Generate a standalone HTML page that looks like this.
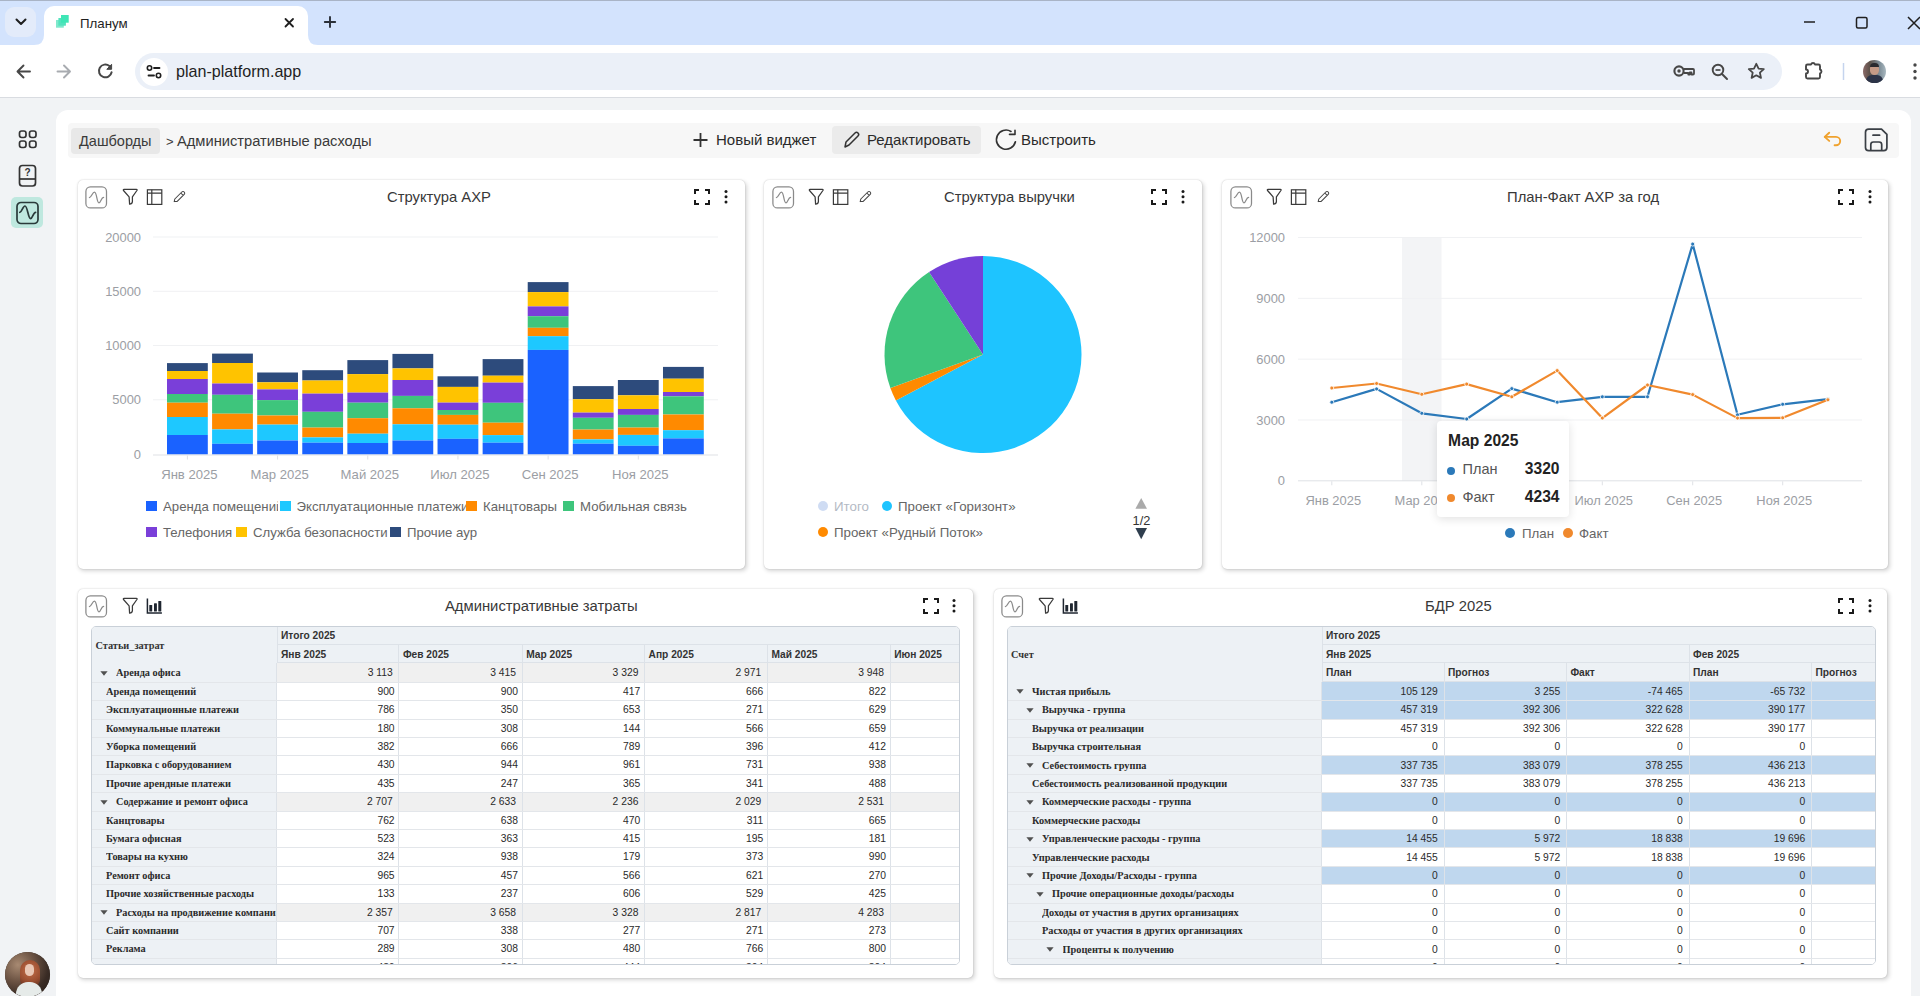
<!DOCTYPE html><html><head><meta charset="utf-8"><style>
*{margin:0;padding:0;box-sizing:border-box}
html,body{width:1920px;height:996px;overflow:hidden;background:#f1f3f5;font-family:"Liberation Sans", sans-serif;color:#333}
.a{position:absolute}
.t{position:absolute;white-space:nowrap;line-height:1}
.card{position:absolute;background:#fff;border-radius:5px;box-shadow:0 0 1.5px rgba(0,0,0,.22),1.5px 2px 4px rgba(0,0,0,.17)}
svg{position:absolute;overflow:visible}
</style></head><body>
<div class="a" style="left:0;top:0;width:1920px;height:45px;background:#d3e3fd"></div>
<div class="a" style="left:0;top:0;width:1920px;height:1px;background:#a9b4c6"></div>
<div class="a" style="left:5px;top:7px;width:31px;height:30px;border-radius:9px;background:#e3ebfa"></div>
<svg style="left:0;top:0" width="60" height="44"><path d="M16.5 19.5 L21 24 L25.5 19.5" fill="none" stroke="#1f1f1f" stroke-width="2" stroke-linecap="round" stroke-linejoin="round"/></svg>
<div class="a" style="left:44px;top:6px;width:264px;height:40px;background:#fff;border-radius:10px 10px 0 0"></div>
<svg style="left:0;top:0" width="330" height="50"><path d="M34 45 Q44 45 44 35 L44 45 Z" fill="#fff"/><path d="M318 45 Q308 45 308 35 L308 45 Z" fill="#fff"/></svg>
<svg style="left:50px;top:10px" width="24" height="24"><rect x="6" y="10" width="7.8" height="7.7" fill="#7fe9cc"/><rect x="8.4" y="8" width="7.5" height="7.7" fill="#52e3bd"/><rect x="11" y="5" width="7.7" height="7.7" fill="#3ee6b6"/></svg>
<div class="t" style="left:80px;top:17px;font-size:13.3px;color:#1f1f1f">Планум</div>
<svg style="left:280px;top:14px" width="20" height="18"><path d="M5.5 5 L13 12.5 M13 5 L5.5 12.5" stroke="#1f1f1f" stroke-width="1.8" stroke-linecap="round"/></svg>
<svg style="left:320px;top:12px" width="20" height="20"><path d="M10 5 V15 M4.8 10 H15.2" stroke="#2a3038" stroke-width="1.9" stroke-linecap="round"/></svg>
<svg style="left:1790px;top:0" width="130" height="44"><path d="M14 22 H25" stroke="#1f1f1f" stroke-width="1.5"/><rect x="66.5" y="17.5" width="10.5" height="10.5" rx="1.5" fill="none" stroke="#1f1f1f" stroke-width="1.5"/><path d="M118 17 L130 29 M130 17 L118 29" stroke="#1f1f1f" stroke-width="1.5"/></svg>
<div class="a" style="left:0;top:45px;width:1920px;height:52px;background:#fff"></div>
<div class="a" style="left:0;top:97px;width:1920px;height:1px;background:#d9dce1"></div>
<svg style="left:0;top:44px" width="130" height="53"><path d="M30 27.5 H18 M23.5 21.5 L17.5 27.5 L23.5 33.5" fill="none" stroke="#474747" stroke-width="1.9" stroke-linecap="round" stroke-linejoin="round"/><path d="M57.5 27.5 H69.5 M64 21.5 L70 27.5 L64 33.5" fill="none" stroke="#a8abb0" stroke-width="1.9" stroke-linecap="round" stroke-linejoin="round"/><path d="M109.4 22 A6.4 6.4 0 1 0 111.6 28.2" fill="none" stroke="#474747" stroke-width="2" stroke-linecap="round"/><path d="M111.6 20.3 V25.3 H106.8 Z" fill="#474747" stroke="#474747" stroke-width="1" stroke-linejoin="round"/></svg>
<div class="a" style="left:135px;top:53px;width:1647px;height:37px;border-radius:19px;background:#ebf0f8"></div>
<div class="a" style="left:140px;top:58px;width:28px;height:28px;border-radius:14px;background:#fff"></div>
<svg style="left:140px;top:58px" width="28" height="28"><circle cx="9.5" cy="10" r="2.2" fill="none" stroke="#1f1f1f" stroke-width="1.6"/><path d="M14 10 H19.5" stroke="#1f1f1f" stroke-width="1.8" stroke-linecap="round"/><circle cx="18.5" cy="17.5" r="2.2" fill="none" stroke="#1f1f1f" stroke-width="1.6"/><path d="M8.5 17.5 H14" stroke="#1f1f1f" stroke-width="1.8" stroke-linecap="round"/></svg>
<div class="t" style="left:176px;top:62.5px;font-size:16.1px;color:#1f1f1f">plan-platform.app</div>
<svg style="left:1660px;top:44px" width="260" height="53"><circle cx="19" cy="27" r="4.6" fill="none" stroke="#474747" stroke-width="2.1"/><circle cx="19" cy="27" r="1.7" fill="#474747"/><path d="M23.8 25 H33 Q34 25 34 26 V29.5 Q34 30.5 33 30.5 H31.5 V28.5 H29.8 V30.5 H28.3 V29 H24" fill="none" stroke="#474747" stroke-width="1.8" stroke-linejoin="round"/><circle cx="58" cy="26" r="5.3" fill="none" stroke="#474747" stroke-width="1.9"/><path d="M55.5 26 H60.5" stroke="#474747" stroke-width="1.7"/><path d="M62 30 L67 35" stroke="#474747" stroke-width="2" stroke-linecap="round"/><path d="M96.3 19.8 L98.6 24.6 L103.8 25.2 L99.9 28.7 L101 33.9 L96.3 31.3 L91.6 33.9 L92.7 28.7 L88.8 25.2 L94 24.6 Z" fill="none" stroke="#474747" stroke-width="1.8" stroke-linejoin="round"/><path d="M146 22 Q146 20.5 147.5 20.5 H151 A2.1 2.1 0 0 1 155 20.5 H158.5 Q160 20.5 160 22 V25.5 A2.1 2.1 0 0 1 160 29.5 V33 Q160 34.5 158.5 34.5 H147.5 Q146 34.5 146 33 V29.5 A2 2 0 0 0 146 25.5 Z" fill="none" stroke="#474747" stroke-width="1.9" stroke-linejoin="round"/><path d="M183.5 19 V36" stroke="#c5d4ee" stroke-width="1.5"/><circle cx="255" cy="21" r="1.7" fill="#474747"/><circle cx="255" cy="27.5" r="1.7" fill="#474747"/><circle cx="255" cy="34" r="1.7" fill="#474747"/></svg>
<div class="a" style="left:1863px;top:60px;width:23px;height:23px;border-radius:12px;overflow:hidden;background:linear-gradient(90deg,#8a6a68 0,#5b5048 30%,#7c8c96 70%,#a9b8c0 100%)"><div class="a" style="left:7px;top:4px;width:9px;height:11px;border-radius:5px;background:#c49a86"></div><div class="a" style="left:7px;top:3px;width:9px;height:4px;border-radius:4px 4px 0 0;background:#2a2a2e"></div><div class="a" style="left:3px;top:15px;width:17px;height:10px;border-radius:6px 6px 0 0;background:#2c3448"></div></div>
<svg style="left:0;top:98px" width="56" height="140"><rect x="19.5" y="33" width="6.5" height="6.5" rx="2.2" fill="none" stroke="#333" stroke-width="1.7"/><rect x="29.5" y="33" width="6.5" height="6.5" rx="2.2" fill="none" stroke="#333" stroke-width="1.7"/><rect x="19.5" y="43" width="6.5" height="6.5" rx="2.2" fill="none" stroke="#333" stroke-width="1.7"/><rect x="29.5" y="43" width="6.5" height="6.5" rx="2.2" fill="none" stroke="#333" stroke-width="1.7"/><rect x="19.5" y="67.5" width="16" height="20.5" rx="3" fill="none" stroke="#333" stroke-width="1.7"/><path d="M19.5 81 H35.5" stroke="#333" stroke-width="1.7"/><text x="27.5" y="78" font-size="10" font-weight="bold" text-anchor="middle" fill="#333" font-family="Liberation Sans">?</text></svg>
<div class="a" style="left:11px;top:197px;width:32px;height:31px;border-radius:5px;background:#bfe8df"></div>
<svg style="left:11px;top:197px" width="32" height="31"><rect x="6" y="5.5" width="21" height="21" rx="4" fill="none" stroke="#2a3a3a" stroke-width="1.7"/><path d="M8.8 15.3 C10.9 15.3 11.8 9 14 9 C16.6 9 17 21.6 19.6 21.6 C21.6 21.6 22.2 15.3 24.6 15.3" fill="none" stroke="#2a3a3a" stroke-width="1.7" stroke-linecap="round"/></svg>
<div class="a" style="left:4.5px;top:951.5px;width:45.5px;height:45.5px;border-radius:23px;overflow:hidden;background:#3a2d27"><div class="a" style="left:0;top:0;width:46px;height:46px;background:radial-gradient(circle at 28% 28%,#a88a72 0,#6d5444 35%,#3a2c25 65%,#221a17 100%)"></div><div class="a" style="left:15px;top:8px;width:20px;height:26px;border-radius:10px 10px 6px 6px;background:radial-gradient(circle at 50% 40%,#c4704a 0,#9a4e30 60%,#5a3020 100%)"></div><div class="a" style="left:20px;top:12px;width:9px;height:12px;border-radius:5px;background:#e9c7b4"></div><div class="a" style="left:11px;top:30px;width:26px;height:20px;border-radius:12px 12px 0 0;background:#e6ebe9"></div></div>
<div class="a" style="left:56px;top:110px;width:1855px;height:900px;border-radius:12px;background:#fff"></div>
<div class="a" style="left:68px;top:123px;width:1831px;height:35px;border-radius:4px;background:#f7f7f7"></div>
<div class="a" style="left:71px;top:128px;width:89px;height:26px;border-radius:4px;background:#e8e8e8"></div>
<div class="t" style="left:79px;top:133.5px;font-size:14.5px;color:#3a3a3a">Дашборды</div>
<div class="t" style="left:166px;top:135px;font-size:13px;color:#3a3a3a">&gt;</div><div class="t" style="left:177px;top:133.5px;font-size:14.7px;color:#3a3a3a">Административные расходы</div>
<div class="a" style="left:832px;top:126px;width:149px;height:28px;border-radius:4px;background:#ebebeb"></div>
<svg style="left:680px;top:120px" width="440" height="40"><path d="M20.5 13 V27 M13.5 20 H27.5" stroke="#333" stroke-width="1.8"/><path d="M165 27 L166 22 L175 13 A1.8 1.8 0 0 1 178 16 L169 25 Z" fill="none" stroke="#333" stroke-width="1.5" stroke-linejoin="round"/><path d="M331 11.4 A9.6 9.6 0 1 0 335.4 21.8" fill="none" stroke="#333" stroke-width="1.7" stroke-linecap="round"/><path d="M335 10.2 L335 14.4 L329.5 14.4" fill="none" stroke="#333" stroke-width="1.6" stroke-linecap="round" stroke-linejoin="round"/></svg>
<div class="t" style="left:716px;top:132px;font-size:15px;color:#2a2a2a">Новый виджет</div>
<div class="t" style="left:867px;top:132px;font-size:15px;color:#2a2a2a">Редактировать</div>
<div class="t" style="left:1021px;top:132px;font-size:15px;color:#2a2a2a">Выстроить</div>
<svg style="left:1815px;top:122px" width="90" height="37"><path d="M14.2 10.7 L9.7 14.9 L14.2 18.9" fill="none" stroke="#f0a22e" stroke-width="1.9" stroke-linecap="round" stroke-linejoin="round"/><path d="M10 14.9 H21 A4.2 4.2 0 0 1 21 23.3 H19.6" fill="none" stroke="#f0a22e" stroke-width="1.9" stroke-linecap="round"/><path d="M53.7 7.1 H66.5 L71.9 12.4 V25.5 A3.2 3.2 0 0 1 68.7 28.7 H53.7 A3.2 3.2 0 0 1 50.5 25.5 V10.3 A3.2 3.2 0 0 1 53.7 7.1 Z" fill="none" stroke="#3a3f45" stroke-width="1.7" stroke-linejoin="round"/><path d="M58 13.2 H64.6" stroke="#3a3f45" stroke-width="1.7" stroke-linecap="round"/><path d="M55.8 28.7 V22.6 A2.6 2.6 0 0 1 58.4 20 H64.1 A2.6 2.6 0 0 1 66.7 22.6 V28.7" fill="none" stroke="#3a3f45" stroke-width="1.7"/></svg>
<div class="card" style="left:78px;top:180px;width:667px;height:389px"></div>
<div class="card" style="left:764px;top:180px;width:438px;height:389px"></div>
<div class="card" style="left:1222px;top:180px;width:666px;height:389px"></div>
<div class="card" style="left:78px;top:589px;width:895px;height:389px"></div>
<div class="card" style="left:994px;top:589px;width:893px;height:389px"></div>
<svg style="left:85px;top:186px" width="23" height="23"><rect x="0.9" y="0.9" width="20.6" height="21" rx="4.5" fill="none" stroke="#8a8a8a" stroke-width="1.25"/><path d="M4.4 11.5 C6.6 11.5 7.3 6.1 9.5 6.1 C11.9 6.1 11.7 16.9 13.9 16.9 C16 16.9 16.1 11.4 18.6 11.4" fill="none" stroke="#8a8a8a" stroke-width="1.25" stroke-linecap="round" stroke-linejoin="round"/></svg>
<svg style="left:122px;top:188px" width="18" height="18"><path d="M2 1.4 H14.4 Q15.6 1.4 14.9 2.5 L10.4 8.8 V13.6 Q10.2 16 7.6 16.1 L7.1 8.8 L1.5 2.5 Q0.9 1.4 2 1.4 Z" fill="none" stroke="#3a3a3a" stroke-width="1.25" stroke-linejoin="round"/></svg>
<svg style="left:146px;top:188px" width="18" height="18"><rect x="1.4" y="1.8" width="14.4" height="14.6" fill="none" stroke="#3a3a3a" stroke-width="1.2"/><path d="M1.4 5.1 H15.8 M5.8 1.8 V16.4" stroke="#3a3a3a" stroke-width="1.2"/></svg>
<svg style="left:173px;top:190px" width="14" height="14"><path d="M1.2 11.6 L1.8 9 L8.8 2 A1.6 1.6 0 0 1 11.2 4.4 L4.2 11.4 Z M7.8 3 L10.2 5.4" fill="none" stroke="#444" stroke-width="1.05" stroke-linejoin="round"/></svg>
<div class="t" style="left:387px;top:189.5px;font-size:14.8px;color:#383838">Структура АХР</div>
<svg style="left:694px;top:189px" width="16" height="16"><path d="M1 5 V1 H5 M11 1 H15 V5 M15 11 V15 H11 M5 15 H1 V11" fill="none" stroke="#1a1a1a" stroke-width="2"/></svg>
<svg style="left:723px;top:189px" width="6" height="16"><circle cx="3" cy="2.5" r="1.5" fill="#1a1a1a"/><circle cx="3" cy="7.7" r="1.5" fill="#1a1a1a"/><circle cx="3" cy="12.9" r="1.5" fill="#1a1a1a"/></svg>
<svg style="left:772px;top:186px" width="23" height="23"><rect x="0.9" y="0.9" width="20.6" height="21" rx="4.5" fill="none" stroke="#8a8a8a" stroke-width="1.25"/><path d="M4.4 11.5 C6.6 11.5 7.3 6.1 9.5 6.1 C11.9 6.1 11.7 16.9 13.9 16.9 C16 16.9 16.1 11.4 18.6 11.4" fill="none" stroke="#8a8a8a" stroke-width="1.25" stroke-linecap="round" stroke-linejoin="round"/></svg>
<svg style="left:808px;top:188px" width="18" height="18"><path d="M2 1.4 H14.4 Q15.6 1.4 14.9 2.5 L10.4 8.8 V13.6 Q10.2 16 7.6 16.1 L7.1 8.8 L1.5 2.5 Q0.9 1.4 2 1.4 Z" fill="none" stroke="#3a3a3a" stroke-width="1.25" stroke-linejoin="round"/></svg>
<svg style="left:832px;top:188px" width="18" height="18"><rect x="1.4" y="1.8" width="14.4" height="14.6" fill="none" stroke="#3a3a3a" stroke-width="1.2"/><path d="M1.4 5.1 H15.8 M5.8 1.8 V16.4" stroke="#3a3a3a" stroke-width="1.2"/></svg>
<svg style="left:859px;top:190px" width="14" height="14"><path d="M1.2 11.6 L1.8 9 L8.8 2 A1.6 1.6 0 0 1 11.2 4.4 L4.2 11.4 Z M7.8 3 L10.2 5.4" fill="none" stroke="#444" stroke-width="1.05" stroke-linejoin="round"/></svg>
<div class="t" style="left:944px;top:189.5px;font-size:14.8px;color:#383838">Структура выручки</div>
<svg style="left:1151px;top:189px" width="16" height="16"><path d="M1 5 V1 H5 M11 1 H15 V5 M15 11 V15 H11 M5 15 H1 V11" fill="none" stroke="#1a1a1a" stroke-width="2"/></svg>
<svg style="left:1180px;top:189px" width="6" height="16"><circle cx="3" cy="2.5" r="1.5" fill="#1a1a1a"/><circle cx="3" cy="7.7" r="1.5" fill="#1a1a1a"/><circle cx="3" cy="12.9" r="1.5" fill="#1a1a1a"/></svg>
<svg style="left:1229.5px;top:186px" width="23" height="23"><rect x="0.9" y="0.9" width="20.6" height="21" rx="4.5" fill="none" stroke="#8a8a8a" stroke-width="1.25"/><path d="M4.4 11.5 C6.6 11.5 7.3 6.1 9.5 6.1 C11.9 6.1 11.7 16.9 13.9 16.9 C16 16.9 16.1 11.4 18.6 11.4" fill="none" stroke="#8a8a8a" stroke-width="1.25" stroke-linecap="round" stroke-linejoin="round"/></svg>
<svg style="left:1266px;top:188px" width="18" height="18"><path d="M2 1.4 H14.4 Q15.6 1.4 14.9 2.5 L10.4 8.8 V13.6 Q10.2 16 7.6 16.1 L7.1 8.8 L1.5 2.5 Q0.9 1.4 2 1.4 Z" fill="none" stroke="#3a3a3a" stroke-width="1.25" stroke-linejoin="round"/></svg>
<svg style="left:1290px;top:188px" width="18" height="18"><rect x="1.4" y="1.8" width="14.4" height="14.6" fill="none" stroke="#3a3a3a" stroke-width="1.2"/><path d="M1.4 5.1 H15.8 M5.8 1.8 V16.4" stroke="#3a3a3a" stroke-width="1.2"/></svg>
<svg style="left:1317px;top:190px" width="14" height="14"><path d="M1.2 11.6 L1.8 9 L8.8 2 A1.6 1.6 0 0 1 11.2 4.4 L4.2 11.4 Z M7.8 3 L10.2 5.4" fill="none" stroke="#444" stroke-width="1.05" stroke-linejoin="round"/></svg>
<div class="t" style="left:1507px;top:189.5px;font-size:14.8px;color:#383838">План-Факт АХР за год</div>
<svg style="left:1838px;top:189px" width="16" height="16"><path d="M1 5 V1 H5 M11 1 H15 V5 M15 11 V15 H11 M5 15 H1 V11" fill="none" stroke="#1a1a1a" stroke-width="2"/></svg>
<svg style="left:1867px;top:189px" width="6" height="16"><circle cx="3" cy="2.5" r="1.5" fill="#1a1a1a"/><circle cx="3" cy="7.7" r="1.5" fill="#1a1a1a"/><circle cx="3" cy="12.9" r="1.5" fill="#1a1a1a"/></svg>
<svg style="left:85px;top:595px" width="23" height="23"><rect x="0.9" y="0.9" width="20.6" height="21" rx="4.5" fill="none" stroke="#8a8a8a" stroke-width="1.25"/><path d="M4.4 11.5 C6.6 11.5 7.3 6.1 9.5 6.1 C11.9 6.1 11.7 16.9 13.9 16.9 C16 16.9 16.1 11.4 18.6 11.4" fill="none" stroke="#8a8a8a" stroke-width="1.25" stroke-linecap="round" stroke-linejoin="round"/></svg>
<svg style="left:122px;top:597px" width="18" height="18"><path d="M2 1.4 H14.4 Q15.6 1.4 14.9 2.5 L10.4 8.8 V13.6 Q10.2 16 7.6 16.1 L7.1 8.8 L1.5 2.5 Q0.9 1.4 2 1.4 Z" fill="none" stroke="#3a3a3a" stroke-width="1.25" stroke-linejoin="round"/></svg>
<svg style="left:145px;top:598px" width="18" height="18"><path d="M2.4 0.6 V14.9 H16.9" fill="none" stroke="#1f2630" stroke-width="1.5"/><rect x="4.3" y="7" width="2.9" height="6.6" rx="0.6" fill="#1f2630"/><rect x="9" y="5.2" width="2.9" height="8.4" rx="0.6" fill="#1f2630"/><rect x="13.3" y="3" width="3" height="10.6" rx="0.6" fill="#1f2630"/></svg>
<div class="t" style="left:445px;top:598.5px;font-size:14.8px;color:#383838">Административные затраты</div>
<svg style="left:923px;top:598px" width="16" height="16"><path d="M1 5 V1 H5 M11 1 H15 V5 M15 11 V15 H11 M5 15 H1 V11" fill="none" stroke="#1a1a1a" stroke-width="2"/></svg>
<svg style="left:951px;top:598px" width="6" height="16"><circle cx="3" cy="2.5" r="1.5" fill="#1a1a1a"/><circle cx="3" cy="7.7" r="1.5" fill="#1a1a1a"/><circle cx="3" cy="12.9" r="1.5" fill="#1a1a1a"/></svg>
<svg style="left:1001px;top:595px" width="23" height="23"><rect x="0.9" y="0.9" width="20.6" height="21" rx="4.5" fill="none" stroke="#8a8a8a" stroke-width="1.25"/><path d="M4.4 11.5 C6.6 11.5 7.3 6.1 9.5 6.1 C11.9 6.1 11.7 16.9 13.9 16.9 C16 16.9 16.1 11.4 18.6 11.4" fill="none" stroke="#8a8a8a" stroke-width="1.25" stroke-linecap="round" stroke-linejoin="round"/></svg>
<svg style="left:1038px;top:597px" width="18" height="18"><path d="M2 1.4 H14.4 Q15.6 1.4 14.9 2.5 L10.4 8.8 V13.6 Q10.2 16 7.6 16.1 L7.1 8.8 L1.5 2.5 Q0.9 1.4 2 1.4 Z" fill="none" stroke="#3a3a3a" stroke-width="1.25" stroke-linejoin="round"/></svg>
<svg style="left:1061px;top:598px" width="18" height="18"><path d="M2.4 0.6 V14.9 H16.9" fill="none" stroke="#1f2630" stroke-width="1.5"/><rect x="4.3" y="7" width="2.9" height="6.6" rx="0.6" fill="#1f2630"/><rect x="9" y="5.2" width="2.9" height="8.4" rx="0.6" fill="#1f2630"/><rect x="13.3" y="3" width="3" height="10.6" rx="0.6" fill="#1f2630"/></svg>
<div class="t" style="left:1425px;top:598.5px;font-size:14.8px;color:#383838">БДР 2025</div>
<svg style="left:1838px;top:598px" width="16" height="16"><path d="M1 5 V1 H5 M11 1 H15 V5 M15 11 V15 H11 M5 15 H1 V11" fill="none" stroke="#1a1a1a" stroke-width="2"/></svg>
<svg style="left:1867px;top:598px" width="6" height="16"><circle cx="3" cy="2.5" r="1.5" fill="#1a1a1a"/><circle cx="3" cy="7.7" r="1.5" fill="#1a1a1a"/><circle cx="3" cy="12.9" r="1.5" fill="#1a1a1a"/></svg>
<svg style="left:0;top:0" width="1920" height="996"><rect x="153" y="236.5" width="565" height="1" fill="#f0f1f3"/><text x="141" y="241.6" font-size="12.9" text-anchor="end" fill="#9b9ea4" font-family="Liberation Sans">20000</text><rect x="153" y="290.8" width="565" height="1" fill="#f0f1f3"/><text x="141" y="295.90000000000003" font-size="12.9" text-anchor="end" fill="#9b9ea4" font-family="Liberation Sans">15000</text><rect x="153" y="345.0" width="565" height="1" fill="#f0f1f3"/><text x="141" y="350.1" font-size="12.9" text-anchor="end" fill="#9b9ea4" font-family="Liberation Sans">10000</text><rect x="153" y="399.3" width="565" height="1" fill="#f0f1f3"/><text x="141" y="404.40000000000003" font-size="12.9" text-anchor="end" fill="#9b9ea4" font-family="Liberation Sans">5000</text><text x="141" y="459.1" font-size="12.9" text-anchor="end" fill="#9b9ea4" font-family="Liberation Sans">0</text><rect x="167.00" y="363.10" width="40.8" height="7.90" fill="#2d4b7c"/><rect x="167.00" y="371.00" width="40.8" height="8.00" fill="#ffc300"/><rect x="167.00" y="379.00" width="40.8" height="15.00" fill="#7a3fd9"/><rect x="167.00" y="394.00" width="40.8" height="8.70" fill="#3ec57c"/><rect x="167.00" y="402.70" width="40.8" height="14.30" fill="#ff8a00"/><rect x="167.00" y="417.00" width="40.8" height="18.00" fill="#1ec8ff"/><rect x="167.00" y="435.00" width="40.8" height="19.50" fill="#1a62ff"/><rect x="212.09" y="353.60" width="40.8" height="9.40" fill="#2d4b7c"/><rect x="212.09" y="363.00" width="40.8" height="20.50" fill="#ffc300"/><rect x="212.09" y="383.50" width="40.8" height="11.30" fill="#7a3fd9"/><rect x="212.09" y="394.80" width="40.8" height="18.90" fill="#3ec57c"/><rect x="212.09" y="413.70" width="40.8" height="15.70" fill="#ff8a00"/><rect x="212.09" y="429.40" width="40.8" height="14.40" fill="#1ec8ff"/><rect x="212.09" y="443.80" width="40.8" height="10.70" fill="#1a62ff"/><rect x="257.18" y="372.50" width="40.8" height="9.80" fill="#2d4b7c"/><rect x="257.18" y="382.30" width="40.8" height="7.10" fill="#ffc300"/><rect x="257.18" y="389.40" width="40.8" height="10.70" fill="#7a3fd9"/><rect x="257.18" y="400.10" width="40.8" height="15.40" fill="#3ec57c"/><rect x="257.18" y="415.50" width="40.8" height="9.10" fill="#ff8a00"/><rect x="257.18" y="424.60" width="40.8" height="15.90" fill="#1ec8ff"/><rect x="257.18" y="440.50" width="40.8" height="14.00" fill="#1a62ff"/><rect x="302.27" y="370.20" width="40.8" height="10.30" fill="#2d4b7c"/><rect x="302.27" y="380.50" width="40.8" height="13.10" fill="#ffc300"/><rect x="302.27" y="393.60" width="40.8" height="18.20" fill="#7a3fd9"/><rect x="302.27" y="411.80" width="40.8" height="15.80" fill="#3ec57c"/><rect x="302.27" y="427.60" width="40.8" height="9.80" fill="#ff8a00"/><rect x="302.27" y="437.40" width="40.8" height="5.30" fill="#1ec8ff"/><rect x="302.27" y="442.70" width="40.8" height="11.80" fill="#1a62ff"/><rect x="347.36" y="360.10" width="40.8" height="14.00" fill="#2d4b7c"/><rect x="347.36" y="374.10" width="40.8" height="18.50" fill="#ffc300"/><rect x="347.36" y="392.60" width="40.8" height="10.10" fill="#7a3fd9"/><rect x="347.36" y="402.70" width="40.8" height="15.50" fill="#3ec57c"/><rect x="347.36" y="418.20" width="40.8" height="15.50" fill="#ff8a00"/><rect x="347.36" y="433.70" width="40.8" height="9.30" fill="#1ec8ff"/><rect x="347.36" y="443.00" width="40.8" height="11.50" fill="#1a62ff"/><rect x="392.45" y="353.90" width="40.8" height="14.50" fill="#2d4b7c"/><rect x="392.45" y="368.40" width="40.8" height="11.60" fill="#ffc300"/><rect x="392.45" y="380.00" width="40.8" height="15.90" fill="#7a3fd9"/><rect x="392.45" y="395.90" width="40.8" height="12.40" fill="#3ec57c"/><rect x="392.45" y="408.30" width="40.8" height="16.00" fill="#ff8a00"/><rect x="392.45" y="424.30" width="40.8" height="16.20" fill="#1ec8ff"/><rect x="392.45" y="440.50" width="40.8" height="14.00" fill="#1a62ff"/><rect x="437.54" y="376.30" width="40.8" height="10.60" fill="#2d4b7c"/><rect x="437.54" y="386.90" width="40.8" height="15.70" fill="#ffc300"/><rect x="437.54" y="402.60" width="40.8" height="7.40" fill="#7a3fd9"/><rect x="437.54" y="410.00" width="40.8" height="4.90" fill="#3ec57c"/><rect x="437.54" y="414.90" width="40.8" height="9.80" fill="#ff8a00"/><rect x="437.54" y="424.70" width="40.8" height="14.10" fill="#1ec8ff"/><rect x="437.54" y="438.80" width="40.8" height="15.70" fill="#1a62ff"/><rect x="482.63" y="359.10" width="40.8" height="16.60" fill="#2d4b7c"/><rect x="482.63" y="375.70" width="40.8" height="6.90" fill="#ffc300"/><rect x="482.63" y="382.60" width="40.8" height="20.20" fill="#7a3fd9"/><rect x="482.63" y="402.80" width="40.8" height="19.90" fill="#3ec57c"/><rect x="482.63" y="422.70" width="40.8" height="12.40" fill="#ff8a00"/><rect x="482.63" y="435.10" width="40.8" height="7.60" fill="#1ec8ff"/><rect x="482.63" y="442.70" width="40.8" height="11.80" fill="#1a62ff"/><rect x="527.72" y="282.10" width="40.8" height="10.00" fill="#2d4b7c"/><rect x="527.72" y="292.10" width="40.8" height="14.30" fill="#ffc300"/><rect x="527.72" y="306.40" width="40.8" height="9.80" fill="#7a3fd9"/><rect x="527.72" y="316.20" width="40.8" height="11.60" fill="#3ec57c"/><rect x="527.72" y="327.80" width="40.8" height="8.40" fill="#ff8a00"/><rect x="527.72" y="336.20" width="40.8" height="13.70" fill="#1ec8ff"/><rect x="527.72" y="349.90" width="40.8" height="104.60" fill="#1a62ff"/><rect x="572.81" y="386.10" width="40.8" height="13.10" fill="#2d4b7c"/><rect x="572.81" y="399.20" width="40.8" height="13.40" fill="#ffc300"/><rect x="572.81" y="412.60" width="40.8" height="5.20" fill="#7a3fd9"/><rect x="572.81" y="417.80" width="40.8" height="11.80" fill="#3ec57c"/><rect x="572.81" y="429.60" width="40.8" height="9.80" fill="#ff8a00"/><rect x="572.81" y="439.40" width="40.8" height="4.30" fill="#1ec8ff"/><rect x="572.81" y="443.70" width="40.8" height="10.80" fill="#1a62ff"/><rect x="617.90" y="380.00" width="40.8" height="15.30" fill="#2d4b7c"/><rect x="617.90" y="395.30" width="40.8" height="13.70" fill="#ffc300"/><rect x="617.90" y="409.00" width="40.8" height="5.90" fill="#7a3fd9"/><rect x="617.90" y="414.90" width="40.8" height="12.70" fill="#3ec57c"/><rect x="617.90" y="427.60" width="40.8" height="7.30" fill="#ff8a00"/><rect x="617.90" y="434.90" width="40.8" height="10.90" fill="#1ec8ff"/><rect x="617.90" y="445.80" width="40.8" height="8.70" fill="#1a62ff"/><rect x="662.99" y="366.90" width="40.8" height="11.80" fill="#2d4b7c"/><rect x="662.99" y="378.70" width="40.8" height="13.30" fill="#ffc300"/><rect x="662.99" y="392.00" width="40.8" height="4.30" fill="#7a3fd9"/><rect x="662.99" y="396.30" width="40.8" height="18.20" fill="#3ec57c"/><rect x="662.99" y="414.50" width="40.8" height="15.70" fill="#ff8a00"/><rect x="662.99" y="430.20" width="40.8" height="8.20" fill="#1ec8ff"/><rect x="662.99" y="438.40" width="40.8" height="16.10" fill="#1a62ff"/><rect x="153" y="454.5" width="565" height="1" fill="#dfe1e5"/><rect x="186.90" y="455.5" width="1" height="4" fill="#dfe1e5"/><text x="189.40" y="478.5" font-size="13.1" text-anchor="middle" fill="#9b9ea4" font-family="Liberation Sans">Янв 2025</text><rect x="277.08" y="455.5" width="1" height="4" fill="#dfe1e5"/><text x="279.58" y="478.5" font-size="13.1" text-anchor="middle" fill="#9b9ea4" font-family="Liberation Sans">Мар 2025</text><rect x="367.26" y="455.5" width="1" height="4" fill="#dfe1e5"/><text x="369.76" y="478.5" font-size="13.1" text-anchor="middle" fill="#9b9ea4" font-family="Liberation Sans">Май 2025</text><rect x="457.44" y="455.5" width="1" height="4" fill="#dfe1e5"/><text x="459.94" y="478.5" font-size="13.1" text-anchor="middle" fill="#9b9ea4" font-family="Liberation Sans">Июл 2025</text><rect x="547.62" y="455.5" width="1" height="4" fill="#dfe1e5"/><text x="550.12" y="478.5" font-size="13.1" text-anchor="middle" fill="#9b9ea4" font-family="Liberation Sans">Сен 2025</text><rect x="637.80" y="455.5" width="1" height="4" fill="#dfe1e5"/><text x="640.30" y="478.5" font-size="13.1" text-anchor="middle" fill="#9b9ea4" font-family="Liberation Sans">Ноя 2025</text></svg>
<div class="t" style="left:163px;top:498.8px;width:115px;overflow:hidden;font-size:13.2px;color:#666;line-height:15px">Аренда помещений</div>
<div class="t" style="left:296.5px;top:498.8px;width:169.5px;overflow:hidden;font-size:13.2px;color:#666;line-height:15px">Эксплуатационные платежи</div>
<div class="t" style="left:483px;top:498.8px;font-size:13.2px;color:#666;line-height:15px">Канцтовары</div>
<div class="t" style="left:580px;top:498.8px;font-size:13.2px;color:#666;line-height:15px">Мобильная связь</div>
<div class="a" style="left:146px;top:500.8px;width:11px;height:10px;background:#1a62ff"></div>
<div class="a" style="left:280px;top:500.8px;width:11px;height:10px;background:#1ec8ff"></div>
<div class="a" style="left:466px;top:500.8px;width:11px;height:10px;background:#ff8a00"></div>
<div class="a" style="left:563px;top:500.8px;width:11px;height:10px;background:#3ec57c"></div>
<div class="t" style="left:163px;top:525.2px;font-size:13.2px;color:#666;line-height:15px">Телефония</div>
<div class="t" style="left:253px;top:525.2px;font-size:13.2px;color:#666;line-height:15px">Служба безопасности</div>
<div class="t" style="left:407px;top:525.2px;font-size:13.2px;color:#666;line-height:15px">Прочие аур</div>
<div class="a" style="left:146px;top:527.2px;width:11px;height:10px;background:#7a3fd9"></div>
<div class="a" style="left:236px;top:527.2px;width:11px;height:10px;background:#ffc300"></div>
<div class="a" style="left:390px;top:527.2px;width:11px;height:10px;background:#2d4b7c"></div>
<svg style="left:0;top:0" width="1920" height="996"><path d="M983 354.5 L983.00 256.00 A98.5 98.5 0 1 1 895.87 400.44 Z" fill="#1ec4ff"/><path d="M983 354.5 L895.87 400.44 A98.5 98.5 0 0 1 890.38 388.03 Z" fill="#ff8a00"/><path d="M983 354.5 L890.38 388.03 A98.5 98.5 0 0 1 929.07 272.08 Z" fill="#3ec57c"/><path d="M983 354.5 L929.07 272.08 A98.5 98.5 0 0 1 983.00 256.00 Z" fill="#7540d8"/></svg>
<div class="a" style="left:818px;top:500.5px;width:10px;height:10px;border-radius:5px;background:#cfdcf3"></div>
<div class="t" style="left:834px;top:498.5px;font-size:13.3px;color:#b4bac4;line-height:15px">Итого</div>
<div class="a" style="left:882px;top:500.5px;width:10px;height:10px;border-radius:5px;background:#1ec4ff"></div>
<div class="t" style="left:898px;top:498.5px;font-size:13.3px;color:#666;line-height:15px">Проект «Горизонт»</div>
<div class="a" style="left:818px;top:527px;width:10px;height:10px;border-radius:5px;background:#ff8a00"></div>
<div class="t" style="left:834px;top:525px;font-size:13.3px;color:#666;line-height:15px">Проект «Рудный Поток»</div>
<svg style="left:1130px;top:495px" width="24" height="50"><path d="M11.2 3 L17 13.8 H5.4 Z" fill="#aaaaaa"/><path d="M5.4 33 H17 L11.2 44.3 Z" fill="#2f3e4e"/><text x="11.5" y="29.5" font-size="12.8" text-anchor="middle" fill="#333" font-family="Liberation Sans">1/2</text></svg>
<svg style="left:0;top:0" width="1920" height="996"><rect x="1402" y="237" width="39.5" height="244" fill="#f3f4f6"/><rect x="1298" y="237.00" width="564" height="1" fill="#f0f1f3"/><text x="1285" y="242.10" font-size="12.9" text-anchor="end" fill="#9b9ea4" font-family="Liberation Sans">12000</text><rect x="1298" y="297.82" width="564" height="1" fill="#f0f1f3"/><text x="1285" y="302.93" font-size="12.9" text-anchor="end" fill="#9b9ea4" font-family="Liberation Sans">9000</text><rect x="1298" y="358.65" width="564" height="1" fill="#f0f1f3"/><text x="1285" y="363.75" font-size="12.9" text-anchor="end" fill="#9b9ea4" font-family="Liberation Sans">6000</text><rect x="1298" y="419.48" width="564" height="1" fill="#f0f1f3"/><text x="1285" y="424.58" font-size="12.9" text-anchor="end" fill="#9b9ea4" font-family="Liberation Sans">3000</text><text x="1285" y="485.40" font-size="12.9" text-anchor="end" fill="#9b9ea4" font-family="Liberation Sans">0</text><rect x="1298" y="480.3" width="564" height="1" fill="#dfe1e5"/><rect x="1331.30" y="481.3" width="1" height="4" fill="#dfe1e5"/><text x="1333.30" y="504.8" font-size="12.9" text-anchor="middle" fill="#9b9ea4" font-family="Liberation Sans">Янв 2025</text><rect x="1421.30" y="481.3" width="1" height="4" fill="#dfe1e5"/><text x="1423.30" y="504.8" font-size="12.9" text-anchor="middle" fill="#9b9ea4" font-family="Liberation Sans">Мар 2025</text><rect x="1511.30" y="481.3" width="1" height="4" fill="#dfe1e5"/><text x="1513.30" y="504.8" font-size="12.9" text-anchor="middle" fill="#9b9ea4" font-family="Liberation Sans">Май 2025</text><rect x="1601.80" y="481.3" width="1" height="4" fill="#dfe1e5"/><text x="1603.80" y="504.8" font-size="12.9" text-anchor="middle" fill="#9b9ea4" font-family="Liberation Sans">Июл 2025</text><rect x="1692.20" y="481.3" width="1" height="4" fill="#dfe1e5"/><text x="1694.20" y="504.8" font-size="12.9" text-anchor="middle" fill="#9b9ea4" font-family="Liberation Sans">Сен 2025</text><rect x="1782.20" y="481.3" width="1" height="4" fill="#dfe1e5"/><text x="1784.20" y="504.8" font-size="12.9" text-anchor="middle" fill="#9b9ea4" font-family="Liberation Sans">Ноя 2025</text><polyline points="1331.8,402.2 1376.6,388.9 1421.8,413.3 1466.7,419.0 1511.8,388.6 1557.2,402.2 1602.3,396.8 1647.5,396.8 1692.7,244.1 1737.5,414.8 1782.7,404.3 1827.9,399.2" fill="none" stroke="#2b79b9" stroke-width="2.2" stroke-linejoin="round"/><circle cx="1331.8" cy="402.2" r="2" fill="#2b79b9" stroke="#fff" stroke-width="0.8"/><circle cx="1376.6" cy="388.9" r="2" fill="#2b79b9" stroke="#fff" stroke-width="0.8"/><circle cx="1421.8" cy="413.3" r="2" fill="#2b79b9" stroke="#fff" stroke-width="0.8"/><circle cx="1466.7" cy="419.0" r="2" fill="#2b79b9" stroke="#fff" stroke-width="0.8"/><circle cx="1511.8" cy="388.6" r="2" fill="#2b79b9" stroke="#fff" stroke-width="0.8"/><circle cx="1557.2" cy="402.2" r="2" fill="#2b79b9" stroke="#fff" stroke-width="0.8"/><circle cx="1602.3" cy="396.8" r="2" fill="#2b79b9" stroke="#fff" stroke-width="0.8"/><circle cx="1647.5" cy="396.8" r="2" fill="#2b79b9" stroke="#fff" stroke-width="0.8"/><circle cx="1692.7" cy="244.1" r="2" fill="#2b79b9" stroke="#fff" stroke-width="0.8"/><circle cx="1737.5" cy="414.8" r="2" fill="#2b79b9" stroke="#fff" stroke-width="0.8"/><circle cx="1782.7" cy="404.3" r="2" fill="#2b79b9" stroke="#fff" stroke-width="0.8"/><circle cx="1827.9" cy="399.2" r="2" fill="#2b79b9" stroke="#fff" stroke-width="0.8"/><polyline points="1331.8,388.0 1376.6,383.5 1421.8,394.3 1466.7,384.1 1511.8,396.8 1557.2,370.6 1602.3,418.1 1647.5,385.0 1692.7,394.6 1737.5,418.1 1782.7,417.8 1827.9,399.8" fill="none" stroke="#f0892d" stroke-width="2.2" stroke-linejoin="round"/><circle cx="1331.8" cy="388.0" r="2" fill="#f0892d" stroke="#fff" stroke-width="0.8"/><circle cx="1376.6" cy="383.5" r="2" fill="#f0892d" stroke="#fff" stroke-width="0.8"/><circle cx="1421.8" cy="394.3" r="2" fill="#f0892d" stroke="#fff" stroke-width="0.8"/><circle cx="1466.7" cy="384.1" r="2" fill="#f0892d" stroke="#fff" stroke-width="0.8"/><circle cx="1511.8" cy="396.8" r="2" fill="#f0892d" stroke="#fff" stroke-width="0.8"/><circle cx="1557.2" cy="370.6" r="2" fill="#f0892d" stroke="#fff" stroke-width="0.8"/><circle cx="1602.3" cy="418.1" r="2" fill="#f0892d" stroke="#fff" stroke-width="0.8"/><circle cx="1647.5" cy="385.0" r="2" fill="#f0892d" stroke="#fff" stroke-width="0.8"/><circle cx="1692.7" cy="394.6" r="2" fill="#f0892d" stroke="#fff" stroke-width="0.8"/><circle cx="1737.5" cy="418.1" r="2" fill="#f0892d" stroke="#fff" stroke-width="0.8"/><circle cx="1782.7" cy="417.8" r="2" fill="#f0892d" stroke="#fff" stroke-width="0.8"/><circle cx="1827.9" cy="399.8" r="2" fill="#f0892d" stroke="#fff" stroke-width="0.8"/></svg>
<div class="a" style="left:1505px;top:527.5px;width:10px;height:10px;border-radius:5px;background:#2b79b9"></div>
<div class="t" style="left:1522px;top:525.5px;font-size:13.3px;color:#666;line-height:15px">План</div>
<div class="a" style="left:1562.5px;top:527.5px;width:10px;height:10px;border-radius:5px;background:#f0892d"></div>
<div class="t" style="left:1579px;top:525.5px;font-size:13.3px;color:#666;line-height:15px">Факт</div>
<div class="a" style="left:1437px;top:421px;width:132px;height:96px;border-radius:4px;background:#fff;box-shadow:0 2px 10px rgba(0,0,0,.12)"></div>
<div class="t" style="left:1448px;top:433px;font-size:15.6px;font-weight:bold;color:#222;line-height:16px">Мар 2025</div>
<div class="a" style="left:1447px;top:466.5px;width:8px;height:8px;border-radius:4px;background:#2b79b9"></div>
<div class="t" style="left:1462.5px;top:461px;font-size:14.5px;color:#555;line-height:16px">План</div>
<div class="t" style="left:1524px;top:461px;width:35.5px;text-align:right;font-size:15.6px;font-weight:bold;color:#222;line-height:16px">3320</div>
<div class="a" style="left:1447px;top:494px;width:8px;height:8px;border-radius:4px;background:#f0892d"></div>
<div class="t" style="left:1462.5px;top:488.5px;font-size:14.5px;color:#555;line-height:16px">Факт</div>
<div class="t" style="left:1524px;top:488.5px;width:35.5px;text-align:right;font-size:15.6px;font-weight:bold;color:#222;line-height:16px">4234</div>
<div class="a" style="left:91px;top:626px;width:869px;height:339px;border:1px solid #c9d0d8;border-radius:5px;overflow:hidden;background:#fff">
<div class="a" style="left:0;top:0;width:869px;height:36.39999999999998px;background:#edf1f5"></div>
<div class="a" style="left:0;top:0;width:185px;height:339px;background:#edf1f5"></div>
<div class="t" style="left:3.5px;top:13px;font-family:'Liberation Serif', serif;font-weight:bold;font-size:10.3px;color:#333;line-height:11px">Статьи_затрат</div>
<div class="t" style="left:189px;top:3.0px;font-weight:bold;font-size:10.2px;color:#333;line-height:11px">Итого 2025</div>
<div class="t" style="left:189px;top:21.700000000000045px;font-weight:bold;font-size:10.2px;color:#333;line-height:11px">Янв 2025</div>
<div class="t" style="left:310.9px;top:21.700000000000045px;font-weight:bold;font-size:10.2px;color:#333;line-height:11px">Фев 2025</div>
<div class="t" style="left:434.20000000000005px;top:21.700000000000045px;font-weight:bold;font-size:10.2px;color:#333;line-height:11px">Мар 2025</div>
<div class="t" style="left:556.6px;top:21.700000000000045px;font-weight:bold;font-size:10.2px;color:#333;line-height:11px">Апр 2025</div>
<div class="t" style="left:679.5px;top:21.700000000000045px;font-weight:bold;font-size:10.2px;color:#333;line-height:11px">Май 2025</div>
<div class="t" style="left:802.2px;top:21.700000000000045px;font-weight:bold;font-size:10.2px;color:#333;line-height:11px">Июн 2025</div>
<div class="a" style="left:185px;top:36px;width:869px;height:19px;background:#f0f0f0"></div>
<div class="a" style="left:184px;top:36px;width:1px;height:19px;background:#dde2e8"></div>
<div class="a" style="left:306px;top:36px;width:1px;height:19px;background:#dde2e8"></div>
<div class="a" style="left:430px;top:36px;width:1px;height:19px;background:#dde2e8"></div>
<div class="a" style="left:552px;top:36px;width:1px;height:19px;background:#dde2e8"></div>
<div class="a" style="left:675px;top:36px;width:1px;height:19px;background:#dde2e8"></div>
<div class="a" style="left:798px;top:36px;width:1px;height:19px;background:#dde2e8"></div>
<div class="a" style="left:921px;top:36px;width:1px;height:19px;background:#dde2e8"></div>
<svg style="left:6.599999999999994px;top:42.89999999999998px" width="10" height="8"><path d="M1.4 1.2 H8.6 L5 5.8 Z" fill="#505050"/></svg>
<div class="t" style="left:24px;top:40.39999999999998px;width:160px;overflow:hidden;font-family:'Liberation Serif', serif;font-weight:bold;font-size:10.3px;color:#2a2a2a;line-height:11px">Аренда офиса</div>
<div class="t" style="left:185px;top:40.39999999999998px;width:115.69999999999997px;text-align:right;font-size:10.3px;color:#2a2a2a;line-height:11px">3 113</div>
<div class="t" style="left:306.9px;top:40.39999999999998px;width:117.10000000000007px;text-align:right;font-size:10.3px;color:#2a2a2a;line-height:11px">3 415</div>
<div class="t" style="left:430.20000000000005px;top:40.39999999999998px;width:116.19999999999997px;text-align:right;font-size:10.3px;color:#2a2a2a;line-height:11px">3 329</div>
<div class="t" style="left:552.6px;top:40.39999999999998px;width:116.69999999999997px;text-align:right;font-size:10.3px;color:#2a2a2a;line-height:11px">2 971</div>
<div class="t" style="left:675.5px;top:40.39999999999998px;width:116.50000000000004px;text-align:right;font-size:10.3px;color:#2a2a2a;line-height:11px">3 948</div>
<div class="t" style="left:798.2px;top:40.39999999999998px;width:116.59999999999995px;text-align:right;font-size:10.3px;color:#2a2a2a;line-height:11px"></div>
<div class="a" style="left:185px;top:55px;width:869px;height:18px;background:#fff"></div>
<div class="a" style="left:184px;top:55px;width:1px;height:18px;background:#dde2e8"></div>
<div class="a" style="left:306px;top:55px;width:1px;height:18px;background:#dde2e8"></div>
<div class="a" style="left:430px;top:55px;width:1px;height:18px;background:#dde2e8"></div>
<div class="a" style="left:552px;top:55px;width:1px;height:18px;background:#dde2e8"></div>
<div class="a" style="left:675px;top:55px;width:1px;height:18px;background:#dde2e8"></div>
<div class="a" style="left:798px;top:55px;width:1px;height:18px;background:#dde2e8"></div>
<div class="a" style="left:921px;top:55px;width:1px;height:18px;background:#dde2e8"></div>
<div class="t" style="left:14px;top:58.799999999999955px;width:170px;overflow:hidden;font-family:'Liberation Serif', serif;font-weight:bold;font-size:10.3px;color:#2a2a2a;line-height:11px">Аренда помещений</div>
<div class="t" style="left:185px;top:58.799999999999955px;width:117.59999999999998px;text-align:right;font-size:10.3px;color:#2a2a2a;line-height:11px">900</div>
<div class="t" style="left:306.9px;top:58.799999999999955px;width:119.00000000000007px;text-align:right;font-size:10.3px;color:#2a2a2a;line-height:11px">900</div>
<div class="t" style="left:430.20000000000005px;top:58.799999999999955px;width:118.09999999999998px;text-align:right;font-size:10.3px;color:#2a2a2a;line-height:11px">417</div>
<div class="t" style="left:552.6px;top:58.799999999999955px;width:118.59999999999998px;text-align:right;font-size:10.3px;color:#2a2a2a;line-height:11px">666</div>
<div class="t" style="left:675.5px;top:58.799999999999955px;width:118.40000000000005px;text-align:right;font-size:10.3px;color:#2a2a2a;line-height:11px">822</div>
<div class="t" style="left:798.2px;top:58.799999999999955px;width:118.49999999999996px;text-align:right;font-size:10.3px;color:#2a2a2a;line-height:11px"></div>
<div class="a" style="left:185px;top:73px;width:869px;height:19px;background:#fff"></div>
<div class="a" style="left:184px;top:73px;width:1px;height:19px;background:#dde2e8"></div>
<div class="a" style="left:306px;top:73px;width:1px;height:19px;background:#dde2e8"></div>
<div class="a" style="left:430px;top:73px;width:1px;height:19px;background:#dde2e8"></div>
<div class="a" style="left:552px;top:73px;width:1px;height:19px;background:#dde2e8"></div>
<div class="a" style="left:675px;top:73px;width:1px;height:19px;background:#dde2e8"></div>
<div class="a" style="left:798px;top:73px;width:1px;height:19px;background:#dde2e8"></div>
<div class="a" style="left:921px;top:73px;width:1px;height:19px;background:#dde2e8"></div>
<div class="t" style="left:14px;top:77.19999999999993px;width:170px;overflow:hidden;font-family:'Liberation Serif', serif;font-weight:bold;font-size:10.3px;color:#2a2a2a;line-height:11px">Эксплуатационные платежи</div>
<div class="t" style="left:185px;top:77.19999999999993px;width:117.59999999999998px;text-align:right;font-size:10.3px;color:#2a2a2a;line-height:11px">786</div>
<div class="t" style="left:306.9px;top:77.19999999999993px;width:119.00000000000007px;text-align:right;font-size:10.3px;color:#2a2a2a;line-height:11px">350</div>
<div class="t" style="left:430.20000000000005px;top:77.19999999999993px;width:118.09999999999998px;text-align:right;font-size:10.3px;color:#2a2a2a;line-height:11px">653</div>
<div class="t" style="left:552.6px;top:77.19999999999993px;width:118.59999999999998px;text-align:right;font-size:10.3px;color:#2a2a2a;line-height:11px">271</div>
<div class="t" style="left:675.5px;top:77.19999999999993px;width:118.40000000000005px;text-align:right;font-size:10.3px;color:#2a2a2a;line-height:11px">629</div>
<div class="t" style="left:798.2px;top:77.19999999999993px;width:118.49999999999996px;text-align:right;font-size:10.3px;color:#2a2a2a;line-height:11px"></div>
<div class="a" style="left:185px;top:92px;width:869px;height:18px;background:#fff"></div>
<div class="a" style="left:184px;top:92px;width:1px;height:18px;background:#dde2e8"></div>
<div class="a" style="left:306px;top:92px;width:1px;height:18px;background:#dde2e8"></div>
<div class="a" style="left:430px;top:92px;width:1px;height:18px;background:#dde2e8"></div>
<div class="a" style="left:552px;top:92px;width:1px;height:18px;background:#dde2e8"></div>
<div class="a" style="left:675px;top:92px;width:1px;height:18px;background:#dde2e8"></div>
<div class="a" style="left:798px;top:92px;width:1px;height:18px;background:#dde2e8"></div>
<div class="a" style="left:921px;top:92px;width:1px;height:18px;background:#dde2e8"></div>
<div class="t" style="left:14px;top:95.60000000000002px;width:170px;overflow:hidden;font-family:'Liberation Serif', serif;font-weight:bold;font-size:10.3px;color:#2a2a2a;line-height:11px">Коммунальные платежи</div>
<div class="t" style="left:185px;top:95.60000000000002px;width:117.59999999999998px;text-align:right;font-size:10.3px;color:#2a2a2a;line-height:11px">180</div>
<div class="t" style="left:306.9px;top:95.60000000000002px;width:119.00000000000007px;text-align:right;font-size:10.3px;color:#2a2a2a;line-height:11px">308</div>
<div class="t" style="left:430.20000000000005px;top:95.60000000000002px;width:118.09999999999998px;text-align:right;font-size:10.3px;color:#2a2a2a;line-height:11px">144</div>
<div class="t" style="left:552.6px;top:95.60000000000002px;width:118.59999999999998px;text-align:right;font-size:10.3px;color:#2a2a2a;line-height:11px">566</div>
<div class="t" style="left:675.5px;top:95.60000000000002px;width:118.40000000000005px;text-align:right;font-size:10.3px;color:#2a2a2a;line-height:11px">659</div>
<div class="t" style="left:798.2px;top:95.60000000000002px;width:118.49999999999996px;text-align:right;font-size:10.3px;color:#2a2a2a;line-height:11px"></div>
<div class="a" style="left:185px;top:110px;width:869px;height:18px;background:#fff"></div>
<div class="a" style="left:184px;top:110px;width:1px;height:18px;background:#dde2e8"></div>
<div class="a" style="left:306px;top:110px;width:1px;height:18px;background:#dde2e8"></div>
<div class="a" style="left:430px;top:110px;width:1px;height:18px;background:#dde2e8"></div>
<div class="a" style="left:552px;top:110px;width:1px;height:18px;background:#dde2e8"></div>
<div class="a" style="left:675px;top:110px;width:1px;height:18px;background:#dde2e8"></div>
<div class="a" style="left:798px;top:110px;width:1px;height:18px;background:#dde2e8"></div>
<div class="a" style="left:921px;top:110px;width:1px;height:18px;background:#dde2e8"></div>
<div class="t" style="left:14px;top:114.0px;width:170px;overflow:hidden;font-family:'Liberation Serif', serif;font-weight:bold;font-size:10.3px;color:#2a2a2a;line-height:11px">Уборка помещений</div>
<div class="t" style="left:185px;top:114.0px;width:117.59999999999998px;text-align:right;font-size:10.3px;color:#2a2a2a;line-height:11px">382</div>
<div class="t" style="left:306.9px;top:114.0px;width:119.00000000000007px;text-align:right;font-size:10.3px;color:#2a2a2a;line-height:11px">666</div>
<div class="t" style="left:430.20000000000005px;top:114.0px;width:118.09999999999998px;text-align:right;font-size:10.3px;color:#2a2a2a;line-height:11px">789</div>
<div class="t" style="left:552.6px;top:114.0px;width:118.59999999999998px;text-align:right;font-size:10.3px;color:#2a2a2a;line-height:11px">396</div>
<div class="t" style="left:675.5px;top:114.0px;width:118.40000000000005px;text-align:right;font-size:10.3px;color:#2a2a2a;line-height:11px">412</div>
<div class="t" style="left:798.2px;top:114.0px;width:118.49999999999996px;text-align:right;font-size:10.3px;color:#2a2a2a;line-height:11px"></div>
<div class="a" style="left:185px;top:128px;width:869px;height:19px;background:#fff"></div>
<div class="a" style="left:184px;top:128px;width:1px;height:19px;background:#dde2e8"></div>
<div class="a" style="left:306px;top:128px;width:1px;height:19px;background:#dde2e8"></div>
<div class="a" style="left:430px;top:128px;width:1px;height:19px;background:#dde2e8"></div>
<div class="a" style="left:552px;top:128px;width:1px;height:19px;background:#dde2e8"></div>
<div class="a" style="left:675px;top:128px;width:1px;height:19px;background:#dde2e8"></div>
<div class="a" style="left:798px;top:128px;width:1px;height:19px;background:#dde2e8"></div>
<div class="a" style="left:921px;top:128px;width:1px;height:19px;background:#dde2e8"></div>
<div class="t" style="left:14px;top:132.39999999999998px;width:170px;overflow:hidden;font-family:'Liberation Serif', serif;font-weight:bold;font-size:10.3px;color:#2a2a2a;line-height:11px">Парковка с оборудованием</div>
<div class="t" style="left:185px;top:132.39999999999998px;width:117.59999999999998px;text-align:right;font-size:10.3px;color:#2a2a2a;line-height:11px">430</div>
<div class="t" style="left:306.9px;top:132.39999999999998px;width:119.00000000000007px;text-align:right;font-size:10.3px;color:#2a2a2a;line-height:11px">944</div>
<div class="t" style="left:430.20000000000005px;top:132.39999999999998px;width:118.09999999999998px;text-align:right;font-size:10.3px;color:#2a2a2a;line-height:11px">961</div>
<div class="t" style="left:552.6px;top:132.39999999999998px;width:118.59999999999998px;text-align:right;font-size:10.3px;color:#2a2a2a;line-height:11px">731</div>
<div class="t" style="left:675.5px;top:132.39999999999998px;width:118.40000000000005px;text-align:right;font-size:10.3px;color:#2a2a2a;line-height:11px">938</div>
<div class="t" style="left:798.2px;top:132.39999999999998px;width:118.49999999999996px;text-align:right;font-size:10.3px;color:#2a2a2a;line-height:11px"></div>
<div class="a" style="left:185px;top:147px;width:869px;height:18px;background:#fff"></div>
<div class="a" style="left:184px;top:147px;width:1px;height:18px;background:#dde2e8"></div>
<div class="a" style="left:306px;top:147px;width:1px;height:18px;background:#dde2e8"></div>
<div class="a" style="left:430px;top:147px;width:1px;height:18px;background:#dde2e8"></div>
<div class="a" style="left:552px;top:147px;width:1px;height:18px;background:#dde2e8"></div>
<div class="a" style="left:675px;top:147px;width:1px;height:18px;background:#dde2e8"></div>
<div class="a" style="left:798px;top:147px;width:1px;height:18px;background:#dde2e8"></div>
<div class="a" style="left:921px;top:147px;width:1px;height:18px;background:#dde2e8"></div>
<div class="t" style="left:14px;top:150.79999999999995px;width:170px;overflow:hidden;font-family:'Liberation Serif', serif;font-weight:bold;font-size:10.3px;color:#2a2a2a;line-height:11px">Прочие арендные платежи</div>
<div class="t" style="left:185px;top:150.79999999999995px;width:117.59999999999998px;text-align:right;font-size:10.3px;color:#2a2a2a;line-height:11px">435</div>
<div class="t" style="left:306.9px;top:150.79999999999995px;width:119.00000000000007px;text-align:right;font-size:10.3px;color:#2a2a2a;line-height:11px">247</div>
<div class="t" style="left:430.20000000000005px;top:150.79999999999995px;width:118.09999999999998px;text-align:right;font-size:10.3px;color:#2a2a2a;line-height:11px">365</div>
<div class="t" style="left:552.6px;top:150.79999999999995px;width:118.59999999999998px;text-align:right;font-size:10.3px;color:#2a2a2a;line-height:11px">341</div>
<div class="t" style="left:675.5px;top:150.79999999999995px;width:118.40000000000005px;text-align:right;font-size:10.3px;color:#2a2a2a;line-height:11px">488</div>
<div class="t" style="left:798.2px;top:150.79999999999995px;width:118.49999999999996px;text-align:right;font-size:10.3px;color:#2a2a2a;line-height:11px"></div>
<div class="a" style="left:185px;top:165px;width:869px;height:19px;background:#f0f0f0"></div>
<div class="a" style="left:184px;top:165px;width:1px;height:19px;background:#dde2e8"></div>
<div class="a" style="left:306px;top:165px;width:1px;height:19px;background:#dde2e8"></div>
<div class="a" style="left:430px;top:165px;width:1px;height:19px;background:#dde2e8"></div>
<div class="a" style="left:552px;top:165px;width:1px;height:19px;background:#dde2e8"></div>
<div class="a" style="left:675px;top:165px;width:1px;height:19px;background:#dde2e8"></div>
<div class="a" style="left:798px;top:165px;width:1px;height:19px;background:#dde2e8"></div>
<div class="a" style="left:921px;top:165px;width:1px;height:19px;background:#dde2e8"></div>
<svg style="left:6.599999999999994px;top:171.69999999999993px" width="10" height="8"><path d="M1.4 1.2 H8.6 L5 5.8 Z" fill="#505050"/></svg>
<div class="t" style="left:24px;top:169.19999999999993px;width:160px;overflow:hidden;font-family:'Liberation Serif', serif;font-weight:bold;font-size:10.3px;color:#2a2a2a;line-height:11px">Содержание и ремонт офиса</div>
<div class="t" style="left:185px;top:169.19999999999993px;width:115.69999999999997px;text-align:right;font-size:10.3px;color:#2a2a2a;line-height:11px">2 707</div>
<div class="t" style="left:306.9px;top:169.19999999999993px;width:117.10000000000007px;text-align:right;font-size:10.3px;color:#2a2a2a;line-height:11px">2 633</div>
<div class="t" style="left:430.20000000000005px;top:169.19999999999993px;width:116.19999999999997px;text-align:right;font-size:10.3px;color:#2a2a2a;line-height:11px">2 236</div>
<div class="t" style="left:552.6px;top:169.19999999999993px;width:116.69999999999997px;text-align:right;font-size:10.3px;color:#2a2a2a;line-height:11px">2 029</div>
<div class="t" style="left:675.5px;top:169.19999999999993px;width:116.50000000000004px;text-align:right;font-size:10.3px;color:#2a2a2a;line-height:11px">2 531</div>
<div class="t" style="left:798.2px;top:169.19999999999993px;width:116.59999999999995px;text-align:right;font-size:10.3px;color:#2a2a2a;line-height:11px"></div>
<div class="a" style="left:185px;top:184px;width:869px;height:18px;background:#fff"></div>
<div class="a" style="left:184px;top:184px;width:1px;height:18px;background:#dde2e8"></div>
<div class="a" style="left:306px;top:184px;width:1px;height:18px;background:#dde2e8"></div>
<div class="a" style="left:430px;top:184px;width:1px;height:18px;background:#dde2e8"></div>
<div class="a" style="left:552px;top:184px;width:1px;height:18px;background:#dde2e8"></div>
<div class="a" style="left:675px;top:184px;width:1px;height:18px;background:#dde2e8"></div>
<div class="a" style="left:798px;top:184px;width:1px;height:18px;background:#dde2e8"></div>
<div class="a" style="left:921px;top:184px;width:1px;height:18px;background:#dde2e8"></div>
<div class="t" style="left:14px;top:187.5999999999999px;width:170px;overflow:hidden;font-family:'Liberation Serif', serif;font-weight:bold;font-size:10.3px;color:#2a2a2a;line-height:11px">Канцтовары</div>
<div class="t" style="left:185px;top:187.5999999999999px;width:117.59999999999998px;text-align:right;font-size:10.3px;color:#2a2a2a;line-height:11px">762</div>
<div class="t" style="left:306.9px;top:187.5999999999999px;width:119.00000000000007px;text-align:right;font-size:10.3px;color:#2a2a2a;line-height:11px">638</div>
<div class="t" style="left:430.20000000000005px;top:187.5999999999999px;width:118.09999999999998px;text-align:right;font-size:10.3px;color:#2a2a2a;line-height:11px">470</div>
<div class="t" style="left:552.6px;top:187.5999999999999px;width:118.59999999999998px;text-align:right;font-size:10.3px;color:#2a2a2a;line-height:11px">311</div>
<div class="t" style="left:675.5px;top:187.5999999999999px;width:118.40000000000005px;text-align:right;font-size:10.3px;color:#2a2a2a;line-height:11px">665</div>
<div class="t" style="left:798.2px;top:187.5999999999999px;width:118.49999999999996px;text-align:right;font-size:10.3px;color:#2a2a2a;line-height:11px"></div>
<div class="a" style="left:185px;top:202px;width:869px;height:18px;background:#fff"></div>
<div class="a" style="left:184px;top:202px;width:1px;height:18px;background:#dde2e8"></div>
<div class="a" style="left:306px;top:202px;width:1px;height:18px;background:#dde2e8"></div>
<div class="a" style="left:430px;top:202px;width:1px;height:18px;background:#dde2e8"></div>
<div class="a" style="left:552px;top:202px;width:1px;height:18px;background:#dde2e8"></div>
<div class="a" style="left:675px;top:202px;width:1px;height:18px;background:#dde2e8"></div>
<div class="a" style="left:798px;top:202px;width:1px;height:18px;background:#dde2e8"></div>
<div class="a" style="left:921px;top:202px;width:1px;height:18px;background:#dde2e8"></div>
<div class="t" style="left:14px;top:206.0px;width:170px;overflow:hidden;font-family:'Liberation Serif', serif;font-weight:bold;font-size:10.3px;color:#2a2a2a;line-height:11px">Бумага офисная</div>
<div class="t" style="left:185px;top:206.0px;width:117.59999999999998px;text-align:right;font-size:10.3px;color:#2a2a2a;line-height:11px">523</div>
<div class="t" style="left:306.9px;top:206.0px;width:119.00000000000007px;text-align:right;font-size:10.3px;color:#2a2a2a;line-height:11px">363</div>
<div class="t" style="left:430.20000000000005px;top:206.0px;width:118.09999999999998px;text-align:right;font-size:10.3px;color:#2a2a2a;line-height:11px">415</div>
<div class="t" style="left:552.6px;top:206.0px;width:118.59999999999998px;text-align:right;font-size:10.3px;color:#2a2a2a;line-height:11px">195</div>
<div class="t" style="left:675.5px;top:206.0px;width:118.40000000000005px;text-align:right;font-size:10.3px;color:#2a2a2a;line-height:11px">181</div>
<div class="t" style="left:798.2px;top:206.0px;width:118.49999999999996px;text-align:right;font-size:10.3px;color:#2a2a2a;line-height:11px"></div>
<div class="a" style="left:185px;top:220px;width:869px;height:19px;background:#fff"></div>
<div class="a" style="left:184px;top:220px;width:1px;height:19px;background:#dde2e8"></div>
<div class="a" style="left:306px;top:220px;width:1px;height:19px;background:#dde2e8"></div>
<div class="a" style="left:430px;top:220px;width:1px;height:19px;background:#dde2e8"></div>
<div class="a" style="left:552px;top:220px;width:1px;height:19px;background:#dde2e8"></div>
<div class="a" style="left:675px;top:220px;width:1px;height:19px;background:#dde2e8"></div>
<div class="a" style="left:798px;top:220px;width:1px;height:19px;background:#dde2e8"></div>
<div class="a" style="left:921px;top:220px;width:1px;height:19px;background:#dde2e8"></div>
<div class="t" style="left:14px;top:224.39999999999998px;width:170px;overflow:hidden;font-family:'Liberation Serif', serif;font-weight:bold;font-size:10.3px;color:#2a2a2a;line-height:11px">Товары на кухню</div>
<div class="t" style="left:185px;top:224.39999999999998px;width:117.59999999999998px;text-align:right;font-size:10.3px;color:#2a2a2a;line-height:11px">324</div>
<div class="t" style="left:306.9px;top:224.39999999999998px;width:119.00000000000007px;text-align:right;font-size:10.3px;color:#2a2a2a;line-height:11px">938</div>
<div class="t" style="left:430.20000000000005px;top:224.39999999999998px;width:118.09999999999998px;text-align:right;font-size:10.3px;color:#2a2a2a;line-height:11px">179</div>
<div class="t" style="left:552.6px;top:224.39999999999998px;width:118.59999999999998px;text-align:right;font-size:10.3px;color:#2a2a2a;line-height:11px">373</div>
<div class="t" style="left:675.5px;top:224.39999999999998px;width:118.40000000000005px;text-align:right;font-size:10.3px;color:#2a2a2a;line-height:11px">990</div>
<div class="t" style="left:798.2px;top:224.39999999999998px;width:118.49999999999996px;text-align:right;font-size:10.3px;color:#2a2a2a;line-height:11px"></div>
<div class="a" style="left:185px;top:239px;width:869px;height:18px;background:#fff"></div>
<div class="a" style="left:184px;top:239px;width:1px;height:18px;background:#dde2e8"></div>
<div class="a" style="left:306px;top:239px;width:1px;height:18px;background:#dde2e8"></div>
<div class="a" style="left:430px;top:239px;width:1px;height:18px;background:#dde2e8"></div>
<div class="a" style="left:552px;top:239px;width:1px;height:18px;background:#dde2e8"></div>
<div class="a" style="left:675px;top:239px;width:1px;height:18px;background:#dde2e8"></div>
<div class="a" style="left:798px;top:239px;width:1px;height:18px;background:#dde2e8"></div>
<div class="a" style="left:921px;top:239px;width:1px;height:18px;background:#dde2e8"></div>
<div class="t" style="left:14px;top:242.79999999999995px;width:170px;overflow:hidden;font-family:'Liberation Serif', serif;font-weight:bold;font-size:10.3px;color:#2a2a2a;line-height:11px">Ремонт офиса</div>
<div class="t" style="left:185px;top:242.79999999999995px;width:117.59999999999998px;text-align:right;font-size:10.3px;color:#2a2a2a;line-height:11px">965</div>
<div class="t" style="left:306.9px;top:242.79999999999995px;width:119.00000000000007px;text-align:right;font-size:10.3px;color:#2a2a2a;line-height:11px">457</div>
<div class="t" style="left:430.20000000000005px;top:242.79999999999995px;width:118.09999999999998px;text-align:right;font-size:10.3px;color:#2a2a2a;line-height:11px">566</div>
<div class="t" style="left:552.6px;top:242.79999999999995px;width:118.59999999999998px;text-align:right;font-size:10.3px;color:#2a2a2a;line-height:11px">621</div>
<div class="t" style="left:675.5px;top:242.79999999999995px;width:118.40000000000005px;text-align:right;font-size:10.3px;color:#2a2a2a;line-height:11px">270</div>
<div class="t" style="left:798.2px;top:242.79999999999995px;width:118.49999999999996px;text-align:right;font-size:10.3px;color:#2a2a2a;line-height:11px"></div>
<div class="a" style="left:185px;top:257px;width:869px;height:19px;background:#fff"></div>
<div class="a" style="left:184px;top:257px;width:1px;height:19px;background:#dde2e8"></div>
<div class="a" style="left:306px;top:257px;width:1px;height:19px;background:#dde2e8"></div>
<div class="a" style="left:430px;top:257px;width:1px;height:19px;background:#dde2e8"></div>
<div class="a" style="left:552px;top:257px;width:1px;height:19px;background:#dde2e8"></div>
<div class="a" style="left:675px;top:257px;width:1px;height:19px;background:#dde2e8"></div>
<div class="a" style="left:798px;top:257px;width:1px;height:19px;background:#dde2e8"></div>
<div class="a" style="left:921px;top:257px;width:1px;height:19px;background:#dde2e8"></div>
<div class="t" style="left:14px;top:261.19999999999993px;width:170px;overflow:hidden;font-family:'Liberation Serif', serif;font-weight:bold;font-size:10.3px;color:#2a2a2a;line-height:11px">Прочие хозяйственные расходы</div>
<div class="t" style="left:185px;top:261.19999999999993px;width:117.59999999999998px;text-align:right;font-size:10.3px;color:#2a2a2a;line-height:11px">133</div>
<div class="t" style="left:306.9px;top:261.19999999999993px;width:119.00000000000007px;text-align:right;font-size:10.3px;color:#2a2a2a;line-height:11px">237</div>
<div class="t" style="left:430.20000000000005px;top:261.19999999999993px;width:118.09999999999998px;text-align:right;font-size:10.3px;color:#2a2a2a;line-height:11px">606</div>
<div class="t" style="left:552.6px;top:261.19999999999993px;width:118.59999999999998px;text-align:right;font-size:10.3px;color:#2a2a2a;line-height:11px">529</div>
<div class="t" style="left:675.5px;top:261.19999999999993px;width:118.40000000000005px;text-align:right;font-size:10.3px;color:#2a2a2a;line-height:11px">425</div>
<div class="t" style="left:798.2px;top:261.19999999999993px;width:118.49999999999996px;text-align:right;font-size:10.3px;color:#2a2a2a;line-height:11px"></div>
<div class="a" style="left:185px;top:276px;width:869px;height:18px;background:#f0f0f0"></div>
<div class="a" style="left:184px;top:276px;width:1px;height:18px;background:#dde2e8"></div>
<div class="a" style="left:306px;top:276px;width:1px;height:18px;background:#dde2e8"></div>
<div class="a" style="left:430px;top:276px;width:1px;height:18px;background:#dde2e8"></div>
<div class="a" style="left:552px;top:276px;width:1px;height:18px;background:#dde2e8"></div>
<div class="a" style="left:675px;top:276px;width:1px;height:18px;background:#dde2e8"></div>
<div class="a" style="left:798px;top:276px;width:1px;height:18px;background:#dde2e8"></div>
<div class="a" style="left:921px;top:276px;width:1px;height:18px;background:#dde2e8"></div>
<svg style="left:6.599999999999994px;top:282.0999999999999px" width="10" height="8"><path d="M1.4 1.2 H8.6 L5 5.8 Z" fill="#505050"/></svg>
<div class="t" style="left:24px;top:279.5999999999999px;width:160px;overflow:hidden;font-family:'Liberation Serif', serif;font-weight:bold;font-size:10.3px;color:#2a2a2a;line-height:11px">Расходы на продвижение компании</div>
<div class="t" style="left:185px;top:279.5999999999999px;width:115.69999999999997px;text-align:right;font-size:10.3px;color:#2a2a2a;line-height:11px">2 357</div>
<div class="t" style="left:306.9px;top:279.5999999999999px;width:117.10000000000007px;text-align:right;font-size:10.3px;color:#2a2a2a;line-height:11px">3 658</div>
<div class="t" style="left:430.20000000000005px;top:279.5999999999999px;width:116.19999999999997px;text-align:right;font-size:10.3px;color:#2a2a2a;line-height:11px">3 328</div>
<div class="t" style="left:552.6px;top:279.5999999999999px;width:116.69999999999997px;text-align:right;font-size:10.3px;color:#2a2a2a;line-height:11px">2 817</div>
<div class="t" style="left:675.5px;top:279.5999999999999px;width:116.50000000000004px;text-align:right;font-size:10.3px;color:#2a2a2a;line-height:11px">4 283</div>
<div class="t" style="left:798.2px;top:279.5999999999999px;width:116.59999999999995px;text-align:right;font-size:10.3px;color:#2a2a2a;line-height:11px"></div>
<div class="a" style="left:185px;top:294px;width:869px;height:18px;background:#fff"></div>
<div class="a" style="left:184px;top:294px;width:1px;height:18px;background:#dde2e8"></div>
<div class="a" style="left:306px;top:294px;width:1px;height:18px;background:#dde2e8"></div>
<div class="a" style="left:430px;top:294px;width:1px;height:18px;background:#dde2e8"></div>
<div class="a" style="left:552px;top:294px;width:1px;height:18px;background:#dde2e8"></div>
<div class="a" style="left:675px;top:294px;width:1px;height:18px;background:#dde2e8"></div>
<div class="a" style="left:798px;top:294px;width:1px;height:18px;background:#dde2e8"></div>
<div class="a" style="left:921px;top:294px;width:1px;height:18px;background:#dde2e8"></div>
<div class="t" style="left:14px;top:298.0px;width:170px;overflow:hidden;font-family:'Liberation Serif', serif;font-weight:bold;font-size:10.3px;color:#2a2a2a;line-height:11px">Сайт компании</div>
<div class="t" style="left:185px;top:298.0px;width:117.59999999999998px;text-align:right;font-size:10.3px;color:#2a2a2a;line-height:11px">707</div>
<div class="t" style="left:306.9px;top:298.0px;width:119.00000000000007px;text-align:right;font-size:10.3px;color:#2a2a2a;line-height:11px">338</div>
<div class="t" style="left:430.20000000000005px;top:298.0px;width:118.09999999999998px;text-align:right;font-size:10.3px;color:#2a2a2a;line-height:11px">277</div>
<div class="t" style="left:552.6px;top:298.0px;width:118.59999999999998px;text-align:right;font-size:10.3px;color:#2a2a2a;line-height:11px">271</div>
<div class="t" style="left:675.5px;top:298.0px;width:118.40000000000005px;text-align:right;font-size:10.3px;color:#2a2a2a;line-height:11px">273</div>
<div class="t" style="left:798.2px;top:298.0px;width:118.49999999999996px;text-align:right;font-size:10.3px;color:#2a2a2a;line-height:11px"></div>
<div class="a" style="left:185px;top:312px;width:869px;height:19px;background:#fff"></div>
<div class="a" style="left:184px;top:312px;width:1px;height:19px;background:#dde2e8"></div>
<div class="a" style="left:306px;top:312px;width:1px;height:19px;background:#dde2e8"></div>
<div class="a" style="left:430px;top:312px;width:1px;height:19px;background:#dde2e8"></div>
<div class="a" style="left:552px;top:312px;width:1px;height:19px;background:#dde2e8"></div>
<div class="a" style="left:675px;top:312px;width:1px;height:19px;background:#dde2e8"></div>
<div class="a" style="left:798px;top:312px;width:1px;height:19px;background:#dde2e8"></div>
<div class="a" style="left:921px;top:312px;width:1px;height:19px;background:#dde2e8"></div>
<div class="t" style="left:14px;top:316.4px;width:170px;overflow:hidden;font-family:'Liberation Serif', serif;font-weight:bold;font-size:10.3px;color:#2a2a2a;line-height:11px">Реклама</div>
<div class="t" style="left:185px;top:316.4px;width:117.59999999999998px;text-align:right;font-size:10.3px;color:#2a2a2a;line-height:11px">289</div>
<div class="t" style="left:306.9px;top:316.4px;width:119.00000000000007px;text-align:right;font-size:10.3px;color:#2a2a2a;line-height:11px">308</div>
<div class="t" style="left:430.20000000000005px;top:316.4px;width:118.09999999999998px;text-align:right;font-size:10.3px;color:#2a2a2a;line-height:11px">480</div>
<div class="t" style="left:552.6px;top:316.4px;width:118.59999999999998px;text-align:right;font-size:10.3px;color:#2a2a2a;line-height:11px">766</div>
<div class="t" style="left:675.5px;top:316.4px;width:118.40000000000005px;text-align:right;font-size:10.3px;color:#2a2a2a;line-height:11px">800</div>
<div class="t" style="left:798.2px;top:316.4px;width:118.49999999999996px;text-align:right;font-size:10.3px;color:#2a2a2a;line-height:11px"></div>
<div class="a" style="left:185px;top:331px;width:869px;height:18px;background:#fff"></div>
<div class="a" style="left:184px;top:331px;width:1px;height:18px;background:#dde2e8"></div>
<div class="a" style="left:306px;top:331px;width:1px;height:18px;background:#dde2e8"></div>
<div class="a" style="left:430px;top:331px;width:1px;height:18px;background:#dde2e8"></div>
<div class="a" style="left:552px;top:331px;width:1px;height:18px;background:#dde2e8"></div>
<div class="a" style="left:675px;top:331px;width:1px;height:18px;background:#dde2e8"></div>
<div class="a" style="left:798px;top:331px;width:1px;height:18px;background:#dde2e8"></div>
<div class="a" style="left:921px;top:331px;width:1px;height:18px;background:#dde2e8"></div>
<div class="t" style="left:14px;top:334.79999999999995px;width:170px;overflow:hidden;font-family:'Liberation Serif', serif;font-weight:bold;font-size:10.3px;color:#2a2a2a;line-height:11px">Прочие расходы</div>
<div class="t" style="left:185px;top:334.79999999999995px;width:117.59999999999998px;text-align:right;font-size:10.3px;color:#2a2a2a;line-height:11px">486</div>
<div class="t" style="left:306.9px;top:334.79999999999995px;width:119.00000000000007px;text-align:right;font-size:10.3px;color:#2a2a2a;line-height:11px">306</div>
<div class="t" style="left:430.20000000000005px;top:334.79999999999995px;width:118.09999999999998px;text-align:right;font-size:10.3px;color:#2a2a2a;line-height:11px">444</div>
<div class="t" style="left:552.6px;top:334.79999999999995px;width:118.59999999999998px;text-align:right;font-size:10.3px;color:#2a2a2a;line-height:11px">304</div>
<div class="t" style="left:675.5px;top:334.79999999999995px;width:118.40000000000005px;text-align:right;font-size:10.3px;color:#2a2a2a;line-height:11px">304</div>
<div class="t" style="left:798.2px;top:334.79999999999995px;width:118.49999999999996px;text-align:right;font-size:10.3px;color:#2a2a2a;line-height:11px"></div>
<div class="a" style="left:0;top:55px;width:869px;height:1px;background:#e3e6ea"></div>
<div class="a" style="left:0;top:73px;width:869px;height:1px;background:#e3e6ea"></div>
<div class="a" style="left:0;top:92px;width:869px;height:1px;background:#e3e6ea"></div>
<div class="a" style="left:0;top:110px;width:869px;height:1px;background:#e3e6ea"></div>
<div class="a" style="left:0;top:128px;width:869px;height:1px;background:#e3e6ea"></div>
<div class="a" style="left:0;top:147px;width:869px;height:1px;background:#e3e6ea"></div>
<div class="a" style="left:0;top:165px;width:869px;height:1px;background:#e3e6ea"></div>
<div class="a" style="left:0;top:184px;width:869px;height:1px;background:#e3e6ea"></div>
<div class="a" style="left:0;top:202px;width:869px;height:1px;background:#e3e6ea"></div>
<div class="a" style="left:0;top:220px;width:869px;height:1px;background:#e3e6ea"></div>
<div class="a" style="left:0;top:239px;width:869px;height:1px;background:#e3e6ea"></div>
<div class="a" style="left:0;top:257px;width:869px;height:1px;background:#e3e6ea"></div>
<div class="a" style="left:0;top:276px;width:869px;height:1px;background:#e3e6ea"></div>
<div class="a" style="left:0;top:294px;width:869px;height:1px;background:#e3e6ea"></div>
<div class="a" style="left:0;top:312px;width:869px;height:1px;background:#e3e6ea"></div>
<div class="a" style="left:0;top:331px;width:869px;height:1px;background:#e3e6ea"></div>
<div class="a" style="left:0;top:349px;width:869px;height:1px;background:#e3e6ea"></div>
<div class="a" style="left:185px;top:17px;width:736px;height:1px;background:#dde2e8"></div>
<div class="a" style="left:185px;top:-1px;width:1px;height:19px;background:#dde2e8"></div>
<div class="a" style="left:185px;top:35px;width:121.89999999999998px;height:1px;background:#dde2e8"></div>
<div class="a" style="left:185px;top:18px;width:1px;height:18px;background:#dde2e8"></div>
<div class="a" style="left:307px;top:35px;width:123.30000000000007px;height:1px;background:#dde2e8"></div>
<div class="a" style="left:306px;top:18px;width:1px;height:18px;background:#dde2e8"></div>
<div class="a" style="left:430px;top:35px;width:122.39999999999998px;height:1px;background:#dde2e8"></div>
<div class="a" style="left:430px;top:18px;width:1px;height:18px;background:#dde2e8"></div>
<div class="a" style="left:553px;top:35px;width:122.89999999999998px;height:1px;background:#dde2e8"></div>
<div class="a" style="left:552px;top:18px;width:1px;height:18px;background:#dde2e8"></div>
<div class="a" style="left:676px;top:35px;width:122.70000000000005px;height:1px;background:#dde2e8"></div>
<div class="a" style="left:675px;top:18px;width:1px;height:18px;background:#dde2e8"></div>
<div class="a" style="left:798px;top:35px;width:122.79999999999995px;height:1px;background:#dde2e8"></div>
<div class="a" style="left:798px;top:18px;width:1px;height:18px;background:#dde2e8"></div>
</div>
<div class="a" style="left:1007px;top:626.3px;width:869px;height:338.70000000000005px;border:1px solid #c9d0d8;border-radius:5px;overflow:hidden;background:#fff">
<div class="a" style="left:0;top:0;width:869px;height:54.700000000000045px;background:#edf1f5"></div>
<div class="a" style="left:0;top:0;width:314px;height:338.70000000000005px;background:#edf1f5"></div>
<div class="t" style="left:3px;top:21.700000000000045px;font-family:'Liberation Serif', serif;font-weight:bold;font-size:10.3px;color:#333;line-height:11px">Счет</div>
<div class="t" style="left:318px;top:3.2000000000000455px;font-weight:bold;font-size:10.2px;color:#333;line-height:11px">Итого 2025</div>
<div class="t" style="left:318px;top:21.350000000000023px;font-weight:bold;font-size:10.2px;color:#333;line-height:11px">Янв 2025</div>
<div class="t" style="left:685px;top:21.350000000000023px;font-weight:bold;font-size:10.2px;color:#333;line-height:11px">Фев 2025</div>
<div class="t" style="left:318px;top:39.85000000000002px;font-weight:bold;font-size:10.2px;color:#333;line-height:11px">План</div>
<div class="t" style="left:440px;top:39.85000000000002px;font-weight:bold;font-size:10.2px;color:#333;line-height:11px">Прогноз</div>
<div class="t" style="left:562.4000000000001px;top:39.85000000000002px;font-weight:bold;font-size:10.2px;color:#333;line-height:11px">Факт</div>
<div class="t" style="left:685px;top:39.85000000000002px;font-weight:bold;font-size:10.2px;color:#333;line-height:11px">План</div>
<div class="t" style="left:807.4000000000001px;top:39.85000000000002px;font-weight:bold;font-size:10.2px;color:#333;line-height:11px">Прогноз</div>
<div class="a" style="left:314px;top:55px;width:869px;height:18px;background:#bfd7ee"></div>
<div class="a" style="left:313px;top:55px;width:1px;height:18px;background:#dde2e8"></div>
<div class="a" style="left:436px;top:55px;width:1px;height:18px;background:#dde2e8"></div>
<div class="a" style="left:558px;top:55px;width:1px;height:18px;background:#dde2e8"></div>
<div class="a" style="left:681px;top:55px;width:1px;height:18px;background:#dde2e8"></div>
<div class="a" style="left:803px;top:55px;width:1px;height:18px;background:#dde2e8"></div>
<div class="a" style="left:926px;top:55px;width:1px;height:18px;background:#dde2e8"></div>
<svg style="left:6.5px;top:61.200000000000045px" width="10" height="8"><path d="M1.4 1.2 H8.6 L5 5.8 Z" fill="#505050"/></svg>
<div class="t" style="left:24px;top:58.700000000000045px;width:289px;overflow:hidden;font-family:'Liberation Serif', serif;font-weight:bold;font-size:10.3px;color:#2a2a2a;line-height:11px">Чистая прибыль</div>
<div class="t" style="left:314px;top:58.700000000000045px;width:115.8px;text-align:right;font-size:10.3px;color:#2a2a2a;line-height:11px">105 129</div>
<div class="t" style="left:436px;top:58.700000000000045px;width:116.20000000000009px;text-align:right;font-size:10.3px;color:#2a2a2a;line-height:11px">3 255</div>
<div class="t" style="left:558.4000000000001px;top:58.700000000000045px;width:116.3999999999999px;text-align:right;font-size:10.3px;color:#2a2a2a;line-height:11px">-74 465</div>
<div class="t" style="left:681px;top:58.700000000000045px;width:116.20000000000009px;text-align:right;font-size:10.3px;color:#2a2a2a;line-height:11px">-65 732</div>
<div class="t" style="left:803.4000000000001px;top:58.700000000000045px;width:116.3999999999999px;text-align:right;font-size:10.3px;color:#2a2a2a;line-height:11px"></div>
<div class="a" style="left:314px;top:73px;width:869px;height:19px;background:#bfd7ee"></div>
<div class="a" style="left:313px;top:73px;width:1px;height:19px;background:#dde2e8"></div>
<div class="a" style="left:436px;top:73px;width:1px;height:19px;background:#dde2e8"></div>
<div class="a" style="left:558px;top:73px;width:1px;height:19px;background:#dde2e8"></div>
<div class="a" style="left:681px;top:73px;width:1px;height:19px;background:#dde2e8"></div>
<div class="a" style="left:803px;top:73px;width:1px;height:19px;background:#dde2e8"></div>
<div class="a" style="left:926px;top:73px;width:1px;height:19px;background:#dde2e8"></div>
<svg style="left:16.700000000000045px;top:79.60000000000002px" width="10" height="8"><path d="M1.4 1.2 H8.6 L5 5.8 Z" fill="#505050"/></svg>
<div class="t" style="left:34px;top:77.10000000000002px;width:279px;overflow:hidden;font-family:'Liberation Serif', serif;font-weight:bold;font-size:10.3px;color:#2a2a2a;line-height:11px">Выручка - группа</div>
<div class="t" style="left:314px;top:77.10000000000002px;width:115.8px;text-align:right;font-size:10.3px;color:#2a2a2a;line-height:11px">457 319</div>
<div class="t" style="left:436px;top:77.10000000000002px;width:116.20000000000009px;text-align:right;font-size:10.3px;color:#2a2a2a;line-height:11px">392 306</div>
<div class="t" style="left:558.4000000000001px;top:77.10000000000002px;width:116.3999999999999px;text-align:right;font-size:10.3px;color:#2a2a2a;line-height:11px">322 628</div>
<div class="t" style="left:681px;top:77.10000000000002px;width:116.20000000000009px;text-align:right;font-size:10.3px;color:#2a2a2a;line-height:11px">390 177</div>
<div class="t" style="left:803.4000000000001px;top:77.10000000000002px;width:116.3999999999999px;text-align:right;font-size:10.3px;color:#2a2a2a;line-height:11px"></div>
<div class="a" style="left:314px;top:92px;width:869px;height:18px;background:#fff"></div>
<div class="a" style="left:313px;top:92px;width:1px;height:18px;background:#dde2e8"></div>
<div class="a" style="left:436px;top:92px;width:1px;height:18px;background:#dde2e8"></div>
<div class="a" style="left:558px;top:92px;width:1px;height:18px;background:#dde2e8"></div>
<div class="a" style="left:681px;top:92px;width:1px;height:18px;background:#dde2e8"></div>
<div class="a" style="left:803px;top:92px;width:1px;height:18px;background:#dde2e8"></div>
<div class="a" style="left:926px;top:92px;width:1px;height:18px;background:#dde2e8"></div>
<div class="t" style="left:24px;top:95.5px;width:289px;overflow:hidden;font-family:'Liberation Serif', serif;font-weight:bold;font-size:10.3px;color:#2a2a2a;line-height:11px">Выручка от реализации</div>
<div class="t" style="left:314px;top:95.5px;width:115.8px;text-align:right;font-size:10.3px;color:#2a2a2a;line-height:11px">457 319</div>
<div class="t" style="left:436px;top:95.5px;width:116.20000000000009px;text-align:right;font-size:10.3px;color:#2a2a2a;line-height:11px">392 306</div>
<div class="t" style="left:558.4000000000001px;top:95.5px;width:116.3999999999999px;text-align:right;font-size:10.3px;color:#2a2a2a;line-height:11px">322 628</div>
<div class="t" style="left:681px;top:95.5px;width:116.20000000000009px;text-align:right;font-size:10.3px;color:#2a2a2a;line-height:11px">390 177</div>
<div class="t" style="left:803.4000000000001px;top:95.5px;width:116.3999999999999px;text-align:right;font-size:10.3px;color:#2a2a2a;line-height:11px"></div>
<div class="a" style="left:314px;top:110px;width:869px;height:18px;background:#fff"></div>
<div class="a" style="left:313px;top:110px;width:1px;height:18px;background:#dde2e8"></div>
<div class="a" style="left:436px;top:110px;width:1px;height:18px;background:#dde2e8"></div>
<div class="a" style="left:558px;top:110px;width:1px;height:18px;background:#dde2e8"></div>
<div class="a" style="left:681px;top:110px;width:1px;height:18px;background:#dde2e8"></div>
<div class="a" style="left:803px;top:110px;width:1px;height:18px;background:#dde2e8"></div>
<div class="a" style="left:926px;top:110px;width:1px;height:18px;background:#dde2e8"></div>
<div class="t" style="left:24px;top:113.90000000000009px;width:289px;overflow:hidden;font-family:'Liberation Serif', serif;font-weight:bold;font-size:10.3px;color:#2a2a2a;line-height:11px">Выручка строительная</div>
<div class="t" style="left:314px;top:113.90000000000009px;width:115.8px;text-align:right;font-size:10.3px;color:#2a2a2a;line-height:11px">0</div>
<div class="t" style="left:436px;top:113.90000000000009px;width:116.20000000000009px;text-align:right;font-size:10.3px;color:#2a2a2a;line-height:11px">0</div>
<div class="t" style="left:558.4000000000001px;top:113.90000000000009px;width:116.3999999999999px;text-align:right;font-size:10.3px;color:#2a2a2a;line-height:11px">0</div>
<div class="t" style="left:681px;top:113.90000000000009px;width:116.20000000000009px;text-align:right;font-size:10.3px;color:#2a2a2a;line-height:11px">0</div>
<div class="t" style="left:803.4000000000001px;top:113.90000000000009px;width:116.3999999999999px;text-align:right;font-size:10.3px;color:#2a2a2a;line-height:11px"></div>
<div class="a" style="left:314px;top:128px;width:869px;height:19px;background:#bfd7ee"></div>
<div class="a" style="left:313px;top:128px;width:1px;height:19px;background:#dde2e8"></div>
<div class="a" style="left:436px;top:128px;width:1px;height:19px;background:#dde2e8"></div>
<div class="a" style="left:558px;top:128px;width:1px;height:19px;background:#dde2e8"></div>
<div class="a" style="left:681px;top:128px;width:1px;height:19px;background:#dde2e8"></div>
<div class="a" style="left:803px;top:128px;width:1px;height:19px;background:#dde2e8"></div>
<div class="a" style="left:926px;top:128px;width:1px;height:19px;background:#dde2e8"></div>
<svg style="left:16.700000000000045px;top:134.80000000000007px" width="10" height="8"><path d="M1.4 1.2 H8.6 L5 5.8 Z" fill="#505050"/></svg>
<div class="t" style="left:34px;top:132.30000000000007px;width:279px;overflow:hidden;font-family:'Liberation Serif', serif;font-weight:bold;font-size:10.3px;color:#2a2a2a;line-height:11px">Себестоимость группа</div>
<div class="t" style="left:314px;top:132.30000000000007px;width:115.8px;text-align:right;font-size:10.3px;color:#2a2a2a;line-height:11px">337 735</div>
<div class="t" style="left:436px;top:132.30000000000007px;width:116.20000000000009px;text-align:right;font-size:10.3px;color:#2a2a2a;line-height:11px">383 079</div>
<div class="t" style="left:558.4000000000001px;top:132.30000000000007px;width:116.3999999999999px;text-align:right;font-size:10.3px;color:#2a2a2a;line-height:11px">378 255</div>
<div class="t" style="left:681px;top:132.30000000000007px;width:116.20000000000009px;text-align:right;font-size:10.3px;color:#2a2a2a;line-height:11px">436 213</div>
<div class="t" style="left:803.4000000000001px;top:132.30000000000007px;width:116.3999999999999px;text-align:right;font-size:10.3px;color:#2a2a2a;line-height:11px"></div>
<div class="a" style="left:314px;top:147px;width:869px;height:18px;background:#fff"></div>
<div class="a" style="left:313px;top:147px;width:1px;height:18px;background:#dde2e8"></div>
<div class="a" style="left:436px;top:147px;width:1px;height:18px;background:#dde2e8"></div>
<div class="a" style="left:558px;top:147px;width:1px;height:18px;background:#dde2e8"></div>
<div class="a" style="left:681px;top:147px;width:1px;height:18px;background:#dde2e8"></div>
<div class="a" style="left:803px;top:147px;width:1px;height:18px;background:#dde2e8"></div>
<div class="a" style="left:926px;top:147px;width:1px;height:18px;background:#dde2e8"></div>
<div class="t" style="left:24px;top:150.70000000000005px;width:289px;overflow:hidden;font-family:'Liberation Serif', serif;font-weight:bold;font-size:10.3px;color:#2a2a2a;line-height:11px">Себестоимость реализованной продукции</div>
<div class="t" style="left:314px;top:150.70000000000005px;width:115.8px;text-align:right;font-size:10.3px;color:#2a2a2a;line-height:11px">337 735</div>
<div class="t" style="left:436px;top:150.70000000000005px;width:116.20000000000009px;text-align:right;font-size:10.3px;color:#2a2a2a;line-height:11px">383 079</div>
<div class="t" style="left:558.4000000000001px;top:150.70000000000005px;width:116.3999999999999px;text-align:right;font-size:10.3px;color:#2a2a2a;line-height:11px">378 255</div>
<div class="t" style="left:681px;top:150.70000000000005px;width:116.20000000000009px;text-align:right;font-size:10.3px;color:#2a2a2a;line-height:11px">436 213</div>
<div class="t" style="left:803.4000000000001px;top:150.70000000000005px;width:116.3999999999999px;text-align:right;font-size:10.3px;color:#2a2a2a;line-height:11px"></div>
<div class="a" style="left:314px;top:165px;width:869px;height:19px;background:#bfd7ee"></div>
<div class="a" style="left:313px;top:165px;width:1px;height:19px;background:#dde2e8"></div>
<div class="a" style="left:436px;top:165px;width:1px;height:19px;background:#dde2e8"></div>
<div class="a" style="left:558px;top:165px;width:1px;height:19px;background:#dde2e8"></div>
<div class="a" style="left:681px;top:165px;width:1px;height:19px;background:#dde2e8"></div>
<div class="a" style="left:803px;top:165px;width:1px;height:19px;background:#dde2e8"></div>
<div class="a" style="left:926px;top:165px;width:1px;height:19px;background:#dde2e8"></div>
<svg style="left:16.700000000000045px;top:171.60000000000002px" width="10" height="8"><path d="M1.4 1.2 H8.6 L5 5.8 Z" fill="#505050"/></svg>
<div class="t" style="left:34px;top:169.10000000000002px;width:279px;overflow:hidden;font-family:'Liberation Serif', serif;font-weight:bold;font-size:10.3px;color:#2a2a2a;line-height:11px">Коммерческие расходы - группа</div>
<div class="t" style="left:314px;top:169.10000000000002px;width:115.8px;text-align:right;font-size:10.3px;color:#2a2a2a;line-height:11px">0</div>
<div class="t" style="left:436px;top:169.10000000000002px;width:116.20000000000009px;text-align:right;font-size:10.3px;color:#2a2a2a;line-height:11px">0</div>
<div class="t" style="left:558.4000000000001px;top:169.10000000000002px;width:116.3999999999999px;text-align:right;font-size:10.3px;color:#2a2a2a;line-height:11px">0</div>
<div class="t" style="left:681px;top:169.10000000000002px;width:116.20000000000009px;text-align:right;font-size:10.3px;color:#2a2a2a;line-height:11px">0</div>
<div class="t" style="left:803.4000000000001px;top:169.10000000000002px;width:116.3999999999999px;text-align:right;font-size:10.3px;color:#2a2a2a;line-height:11px"></div>
<div class="a" style="left:314px;top:184px;width:869px;height:18px;background:#fff"></div>
<div class="a" style="left:313px;top:184px;width:1px;height:18px;background:#dde2e8"></div>
<div class="a" style="left:436px;top:184px;width:1px;height:18px;background:#dde2e8"></div>
<div class="a" style="left:558px;top:184px;width:1px;height:18px;background:#dde2e8"></div>
<div class="a" style="left:681px;top:184px;width:1px;height:18px;background:#dde2e8"></div>
<div class="a" style="left:803px;top:184px;width:1px;height:18px;background:#dde2e8"></div>
<div class="a" style="left:926px;top:184px;width:1px;height:18px;background:#dde2e8"></div>
<div class="t" style="left:24px;top:187.5px;width:289px;overflow:hidden;font-family:'Liberation Serif', serif;font-weight:bold;font-size:10.3px;color:#2a2a2a;line-height:11px">Коммерческие расходы</div>
<div class="t" style="left:314px;top:187.5px;width:115.8px;text-align:right;font-size:10.3px;color:#2a2a2a;line-height:11px">0</div>
<div class="t" style="left:436px;top:187.5px;width:116.20000000000009px;text-align:right;font-size:10.3px;color:#2a2a2a;line-height:11px">0</div>
<div class="t" style="left:558.4000000000001px;top:187.5px;width:116.3999999999999px;text-align:right;font-size:10.3px;color:#2a2a2a;line-height:11px">0</div>
<div class="t" style="left:681px;top:187.5px;width:116.20000000000009px;text-align:right;font-size:10.3px;color:#2a2a2a;line-height:11px">0</div>
<div class="t" style="left:803.4000000000001px;top:187.5px;width:116.3999999999999px;text-align:right;font-size:10.3px;color:#2a2a2a;line-height:11px"></div>
<div class="a" style="left:314px;top:202px;width:869px;height:18px;background:#bfd7ee"></div>
<div class="a" style="left:313px;top:202px;width:1px;height:18px;background:#dde2e8"></div>
<div class="a" style="left:436px;top:202px;width:1px;height:18px;background:#dde2e8"></div>
<div class="a" style="left:558px;top:202px;width:1px;height:18px;background:#dde2e8"></div>
<div class="a" style="left:681px;top:202px;width:1px;height:18px;background:#dde2e8"></div>
<div class="a" style="left:803px;top:202px;width:1px;height:18px;background:#dde2e8"></div>
<div class="a" style="left:926px;top:202px;width:1px;height:18px;background:#dde2e8"></div>
<svg style="left:16.700000000000045px;top:208.4000000000001px" width="10" height="8"><path d="M1.4 1.2 H8.6 L5 5.8 Z" fill="#505050"/></svg>
<div class="t" style="left:34px;top:205.9000000000001px;width:279px;overflow:hidden;font-family:'Liberation Serif', serif;font-weight:bold;font-size:10.3px;color:#2a2a2a;line-height:11px">Управленческие расходы - группа</div>
<div class="t" style="left:314px;top:205.9000000000001px;width:115.8px;text-align:right;font-size:10.3px;color:#2a2a2a;line-height:11px">14 455</div>
<div class="t" style="left:436px;top:205.9000000000001px;width:116.20000000000009px;text-align:right;font-size:10.3px;color:#2a2a2a;line-height:11px">5 972</div>
<div class="t" style="left:558.4000000000001px;top:205.9000000000001px;width:116.3999999999999px;text-align:right;font-size:10.3px;color:#2a2a2a;line-height:11px">18 838</div>
<div class="t" style="left:681px;top:205.9000000000001px;width:116.20000000000009px;text-align:right;font-size:10.3px;color:#2a2a2a;line-height:11px">19 696</div>
<div class="t" style="left:803.4000000000001px;top:205.9000000000001px;width:116.3999999999999px;text-align:right;font-size:10.3px;color:#2a2a2a;line-height:11px"></div>
<div class="a" style="left:314px;top:220px;width:869px;height:19px;background:#fff"></div>
<div class="a" style="left:313px;top:220px;width:1px;height:19px;background:#dde2e8"></div>
<div class="a" style="left:436px;top:220px;width:1px;height:19px;background:#dde2e8"></div>
<div class="a" style="left:558px;top:220px;width:1px;height:19px;background:#dde2e8"></div>
<div class="a" style="left:681px;top:220px;width:1px;height:19px;background:#dde2e8"></div>
<div class="a" style="left:803px;top:220px;width:1px;height:19px;background:#dde2e8"></div>
<div class="a" style="left:926px;top:220px;width:1px;height:19px;background:#dde2e8"></div>
<div class="t" style="left:24px;top:224.30000000000007px;width:289px;overflow:hidden;font-family:'Liberation Serif', serif;font-weight:bold;font-size:10.3px;color:#2a2a2a;line-height:11px">Управленческие расходы</div>
<div class="t" style="left:314px;top:224.30000000000007px;width:115.8px;text-align:right;font-size:10.3px;color:#2a2a2a;line-height:11px">14 455</div>
<div class="t" style="left:436px;top:224.30000000000007px;width:116.20000000000009px;text-align:right;font-size:10.3px;color:#2a2a2a;line-height:11px">5 972</div>
<div class="t" style="left:558.4000000000001px;top:224.30000000000007px;width:116.3999999999999px;text-align:right;font-size:10.3px;color:#2a2a2a;line-height:11px">18 838</div>
<div class="t" style="left:681px;top:224.30000000000007px;width:116.20000000000009px;text-align:right;font-size:10.3px;color:#2a2a2a;line-height:11px">19 696</div>
<div class="t" style="left:803.4000000000001px;top:224.30000000000007px;width:116.3999999999999px;text-align:right;font-size:10.3px;color:#2a2a2a;line-height:11px"></div>
<div class="a" style="left:314px;top:239px;width:869px;height:18px;background:#bfd7ee"></div>
<div class="a" style="left:313px;top:239px;width:1px;height:18px;background:#dde2e8"></div>
<div class="a" style="left:436px;top:239px;width:1px;height:18px;background:#dde2e8"></div>
<div class="a" style="left:558px;top:239px;width:1px;height:18px;background:#dde2e8"></div>
<div class="a" style="left:681px;top:239px;width:1px;height:18px;background:#dde2e8"></div>
<div class="a" style="left:803px;top:239px;width:1px;height:18px;background:#dde2e8"></div>
<div class="a" style="left:926px;top:239px;width:1px;height:18px;background:#dde2e8"></div>
<svg style="left:16.700000000000045px;top:245.20000000000005px" width="10" height="8"><path d="M1.4 1.2 H8.6 L5 5.8 Z" fill="#505050"/></svg>
<div class="t" style="left:34px;top:242.70000000000005px;width:279px;overflow:hidden;font-family:'Liberation Serif', serif;font-weight:bold;font-size:10.3px;color:#2a2a2a;line-height:11px">Прочие Доходы/Расходы - группа</div>
<div class="t" style="left:314px;top:242.70000000000005px;width:115.8px;text-align:right;font-size:10.3px;color:#2a2a2a;line-height:11px">0</div>
<div class="t" style="left:436px;top:242.70000000000005px;width:116.20000000000009px;text-align:right;font-size:10.3px;color:#2a2a2a;line-height:11px">0</div>
<div class="t" style="left:558.4000000000001px;top:242.70000000000005px;width:116.3999999999999px;text-align:right;font-size:10.3px;color:#2a2a2a;line-height:11px">0</div>
<div class="t" style="left:681px;top:242.70000000000005px;width:116.20000000000009px;text-align:right;font-size:10.3px;color:#2a2a2a;line-height:11px">0</div>
<div class="t" style="left:803.4000000000001px;top:242.70000000000005px;width:116.3999999999999px;text-align:right;font-size:10.3px;color:#2a2a2a;line-height:11px"></div>
<div class="a" style="left:314px;top:257px;width:869px;height:19px;background:#fff"></div>
<div class="a" style="left:313px;top:257px;width:1px;height:19px;background:#dde2e8"></div>
<div class="a" style="left:436px;top:257px;width:1px;height:19px;background:#dde2e8"></div>
<div class="a" style="left:558px;top:257px;width:1px;height:19px;background:#dde2e8"></div>
<div class="a" style="left:681px;top:257px;width:1px;height:19px;background:#dde2e8"></div>
<div class="a" style="left:803px;top:257px;width:1px;height:19px;background:#dde2e8"></div>
<div class="a" style="left:926px;top:257px;width:1px;height:19px;background:#dde2e8"></div>
<svg style="left:26.799999999999955px;top:263.6px" width="10" height="8"><path d="M1.4 1.2 H8.6 L5 5.8 Z" fill="#505050"/></svg>
<div class="t" style="left:44px;top:261.1px;width:269px;overflow:hidden;font-family:'Liberation Serif', serif;font-weight:bold;font-size:10.3px;color:#2a2a2a;line-height:11px">Прочие операционные доходы/расходы</div>
<div class="t" style="left:314px;top:261.1px;width:115.8px;text-align:right;font-size:10.3px;color:#2a2a2a;line-height:11px">0</div>
<div class="t" style="left:436px;top:261.1px;width:116.20000000000009px;text-align:right;font-size:10.3px;color:#2a2a2a;line-height:11px">0</div>
<div class="t" style="left:558.4000000000001px;top:261.1px;width:116.3999999999999px;text-align:right;font-size:10.3px;color:#2a2a2a;line-height:11px">0</div>
<div class="t" style="left:681px;top:261.1px;width:116.20000000000009px;text-align:right;font-size:10.3px;color:#2a2a2a;line-height:11px">0</div>
<div class="t" style="left:803.4000000000001px;top:261.1px;width:116.3999999999999px;text-align:right;font-size:10.3px;color:#2a2a2a;line-height:11px"></div>
<div class="a" style="left:314px;top:276px;width:869px;height:18px;background:#fff"></div>
<div class="a" style="left:313px;top:276px;width:1px;height:18px;background:#dde2e8"></div>
<div class="a" style="left:436px;top:276px;width:1px;height:18px;background:#dde2e8"></div>
<div class="a" style="left:558px;top:276px;width:1px;height:18px;background:#dde2e8"></div>
<div class="a" style="left:681px;top:276px;width:1px;height:18px;background:#dde2e8"></div>
<div class="a" style="left:803px;top:276px;width:1px;height:18px;background:#dde2e8"></div>
<div class="a" style="left:926px;top:276px;width:1px;height:18px;background:#dde2e8"></div>
<div class="t" style="left:34px;top:279.5px;width:279px;overflow:hidden;font-family:'Liberation Serif', serif;font-weight:bold;font-size:10.3px;color:#2a2a2a;line-height:11px">Доходы от участия в других организациях</div>
<div class="t" style="left:314px;top:279.5px;width:115.8px;text-align:right;font-size:10.3px;color:#2a2a2a;line-height:11px">0</div>
<div class="t" style="left:436px;top:279.5px;width:116.20000000000009px;text-align:right;font-size:10.3px;color:#2a2a2a;line-height:11px">0</div>
<div class="t" style="left:558.4000000000001px;top:279.5px;width:116.3999999999999px;text-align:right;font-size:10.3px;color:#2a2a2a;line-height:11px">0</div>
<div class="t" style="left:681px;top:279.5px;width:116.20000000000009px;text-align:right;font-size:10.3px;color:#2a2a2a;line-height:11px">0</div>
<div class="t" style="left:803.4000000000001px;top:279.5px;width:116.3999999999999px;text-align:right;font-size:10.3px;color:#2a2a2a;line-height:11px"></div>
<div class="a" style="left:314px;top:294px;width:869px;height:18px;background:#fff"></div>
<div class="a" style="left:313px;top:294px;width:1px;height:18px;background:#dde2e8"></div>
<div class="a" style="left:436px;top:294px;width:1px;height:18px;background:#dde2e8"></div>
<div class="a" style="left:558px;top:294px;width:1px;height:18px;background:#dde2e8"></div>
<div class="a" style="left:681px;top:294px;width:1px;height:18px;background:#dde2e8"></div>
<div class="a" style="left:803px;top:294px;width:1px;height:18px;background:#dde2e8"></div>
<div class="a" style="left:926px;top:294px;width:1px;height:18px;background:#dde2e8"></div>
<div class="t" style="left:34px;top:297.9000000000001px;width:279px;overflow:hidden;font-family:'Liberation Serif', serif;font-weight:bold;font-size:10.3px;color:#2a2a2a;line-height:11px">Расходы от участия в других организациях</div>
<div class="t" style="left:314px;top:297.9000000000001px;width:115.8px;text-align:right;font-size:10.3px;color:#2a2a2a;line-height:11px">0</div>
<div class="t" style="left:436px;top:297.9000000000001px;width:116.20000000000009px;text-align:right;font-size:10.3px;color:#2a2a2a;line-height:11px">0</div>
<div class="t" style="left:558.4000000000001px;top:297.9000000000001px;width:116.3999999999999px;text-align:right;font-size:10.3px;color:#2a2a2a;line-height:11px">0</div>
<div class="t" style="left:681px;top:297.9000000000001px;width:116.20000000000009px;text-align:right;font-size:10.3px;color:#2a2a2a;line-height:11px">0</div>
<div class="t" style="left:803.4000000000001px;top:297.9000000000001px;width:116.3999999999999px;text-align:right;font-size:10.3px;color:#2a2a2a;line-height:11px"></div>
<div class="a" style="left:314px;top:312px;width:869px;height:19px;background:#fff"></div>
<div class="a" style="left:313px;top:312px;width:1px;height:19px;background:#dde2e8"></div>
<div class="a" style="left:436px;top:312px;width:1px;height:19px;background:#dde2e8"></div>
<div class="a" style="left:558px;top:312px;width:1px;height:19px;background:#dde2e8"></div>
<div class="a" style="left:681px;top:312px;width:1px;height:19px;background:#dde2e8"></div>
<div class="a" style="left:803px;top:312px;width:1px;height:19px;background:#dde2e8"></div>
<div class="a" style="left:926px;top:312px;width:1px;height:19px;background:#dde2e8"></div>
<svg style="left:37px;top:318.79999999999995px" width="10" height="8"><path d="M1.4 1.2 H8.6 L5 5.8 Z" fill="#505050"/></svg>
<div class="t" style="left:54.5px;top:316.29999999999995px;width:258.5px;overflow:hidden;font-family:'Liberation Serif', serif;font-weight:bold;font-size:10.3px;color:#2a2a2a;line-height:11px">Проценты к получению</div>
<div class="t" style="left:314px;top:316.29999999999995px;width:115.8px;text-align:right;font-size:10.3px;color:#2a2a2a;line-height:11px">0</div>
<div class="t" style="left:436px;top:316.29999999999995px;width:116.20000000000009px;text-align:right;font-size:10.3px;color:#2a2a2a;line-height:11px">0</div>
<div class="t" style="left:558.4000000000001px;top:316.29999999999995px;width:116.3999999999999px;text-align:right;font-size:10.3px;color:#2a2a2a;line-height:11px">0</div>
<div class="t" style="left:681px;top:316.29999999999995px;width:116.20000000000009px;text-align:right;font-size:10.3px;color:#2a2a2a;line-height:11px">0</div>
<div class="t" style="left:803.4000000000001px;top:316.29999999999995px;width:116.3999999999999px;text-align:right;font-size:10.3px;color:#2a2a2a;line-height:11px"></div>
<div class="a" style="left:314px;top:331px;width:869px;height:18px;background:#fff"></div>
<div class="a" style="left:313px;top:331px;width:1px;height:18px;background:#dde2e8"></div>
<div class="a" style="left:436px;top:331px;width:1px;height:18px;background:#dde2e8"></div>
<div class="a" style="left:558px;top:331px;width:1px;height:18px;background:#dde2e8"></div>
<div class="a" style="left:681px;top:331px;width:1px;height:18px;background:#dde2e8"></div>
<div class="a" style="left:803px;top:331px;width:1px;height:18px;background:#dde2e8"></div>
<div class="a" style="left:926px;top:331px;width:1px;height:18px;background:#dde2e8"></div>
<div class="t" style="left:44px;top:334.70000000000005px;width:269px;overflow:hidden;font-family:'Liberation Serif', serif;font-weight:bold;font-size:10.3px;color:#2a2a2a;line-height:11px">Проценты</div>
<div class="t" style="left:314px;top:334.70000000000005px;width:115.8px;text-align:right;font-size:10.3px;color:#2a2a2a;line-height:11px">0</div>
<div class="t" style="left:436px;top:334.70000000000005px;width:116.20000000000009px;text-align:right;font-size:10.3px;color:#2a2a2a;line-height:11px">0</div>
<div class="t" style="left:558.4000000000001px;top:334.70000000000005px;width:116.3999999999999px;text-align:right;font-size:10.3px;color:#2a2a2a;line-height:11px">0</div>
<div class="t" style="left:681px;top:334.70000000000005px;width:116.20000000000009px;text-align:right;font-size:10.3px;color:#2a2a2a;line-height:11px">0</div>
<div class="t" style="left:803.4000000000001px;top:334.70000000000005px;width:116.3999999999999px;text-align:right;font-size:10.3px;color:#2a2a2a;line-height:11px"></div>
<div class="a" style="left:0;top:73px;width:869px;height:1px;background:#e3e6ea"></div>
<div class="a" style="left:0;top:92px;width:869px;height:1px;background:#e3e6ea"></div>
<div class="a" style="left:0;top:110px;width:869px;height:1px;background:#e3e6ea"></div>
<div class="a" style="left:0;top:128px;width:869px;height:1px;background:#e3e6ea"></div>
<div class="a" style="left:0;top:147px;width:869px;height:1px;background:#e3e6ea"></div>
<div class="a" style="left:0;top:165px;width:869px;height:1px;background:#e3e6ea"></div>
<div class="a" style="left:0;top:184px;width:869px;height:1px;background:#e3e6ea"></div>
<div class="a" style="left:0;top:202px;width:869px;height:1px;background:#e3e6ea"></div>
<div class="a" style="left:0;top:220px;width:869px;height:1px;background:#e3e6ea"></div>
<div class="a" style="left:0;top:239px;width:869px;height:1px;background:#e3e6ea"></div>
<div class="a" style="left:0;top:257px;width:869px;height:1px;background:#e3e6ea"></div>
<div class="a" style="left:0;top:276px;width:869px;height:1px;background:#e3e6ea"></div>
<div class="a" style="left:0;top:294px;width:869px;height:1px;background:#e3e6ea"></div>
<div class="a" style="left:0;top:312px;width:869px;height:1px;background:#e3e6ea"></div>
<div class="a" style="left:0;top:331px;width:869px;height:1px;background:#e3e6ea"></div>
<div class="a" style="left:0;top:349px;width:869px;height:1px;background:#e3e6ea"></div>
<div class="a" style="left:314px;top:17px;width:612px;height:1px;background:#dde2e8"></div>
<div class="a" style="left:314px;top:0px;width:1px;height:18px;background:#dde2e8"></div>
<div class="a" style="left:314px;top:35px;width:367px;height:1px;background:#dde2e8"></div>
<div class="a" style="left:314px;top:18px;width:1px;height:18px;background:#dde2e8"></div>
<div class="a" style="left:681px;top:35px;width:245px;height:1px;background:#dde2e8"></div>
<div class="a" style="left:681px;top:18px;width:1px;height:18px;background:#dde2e8"></div>
<div class="a" style="left:314px;top:54px;width:122px;height:1px;background:#dde2e8"></div>
<div class="a" style="left:314px;top:36px;width:1px;height:19px;background:#dde2e8"></div>
<div class="a" style="left:436px;top:54px;width:122.40000000000009px;height:1px;background:#dde2e8"></div>
<div class="a" style="left:436px;top:36px;width:1px;height:19px;background:#dde2e8"></div>
<div class="a" style="left:558px;top:54px;width:122.59999999999991px;height:1px;background:#dde2e8"></div>
<div class="a" style="left:558px;top:36px;width:1px;height:19px;background:#dde2e8"></div>
<div class="a" style="left:681px;top:54px;width:122.40000000000009px;height:1px;background:#dde2e8"></div>
<div class="a" style="left:681px;top:36px;width:1px;height:19px;background:#dde2e8"></div>
<div class="a" style="left:803px;top:54px;width:122.59999999999991px;height:1px;background:#dde2e8"></div>
<div class="a" style="left:803px;top:36px;width:1px;height:19px;background:#dde2e8"></div>
</div>
</body></html>
